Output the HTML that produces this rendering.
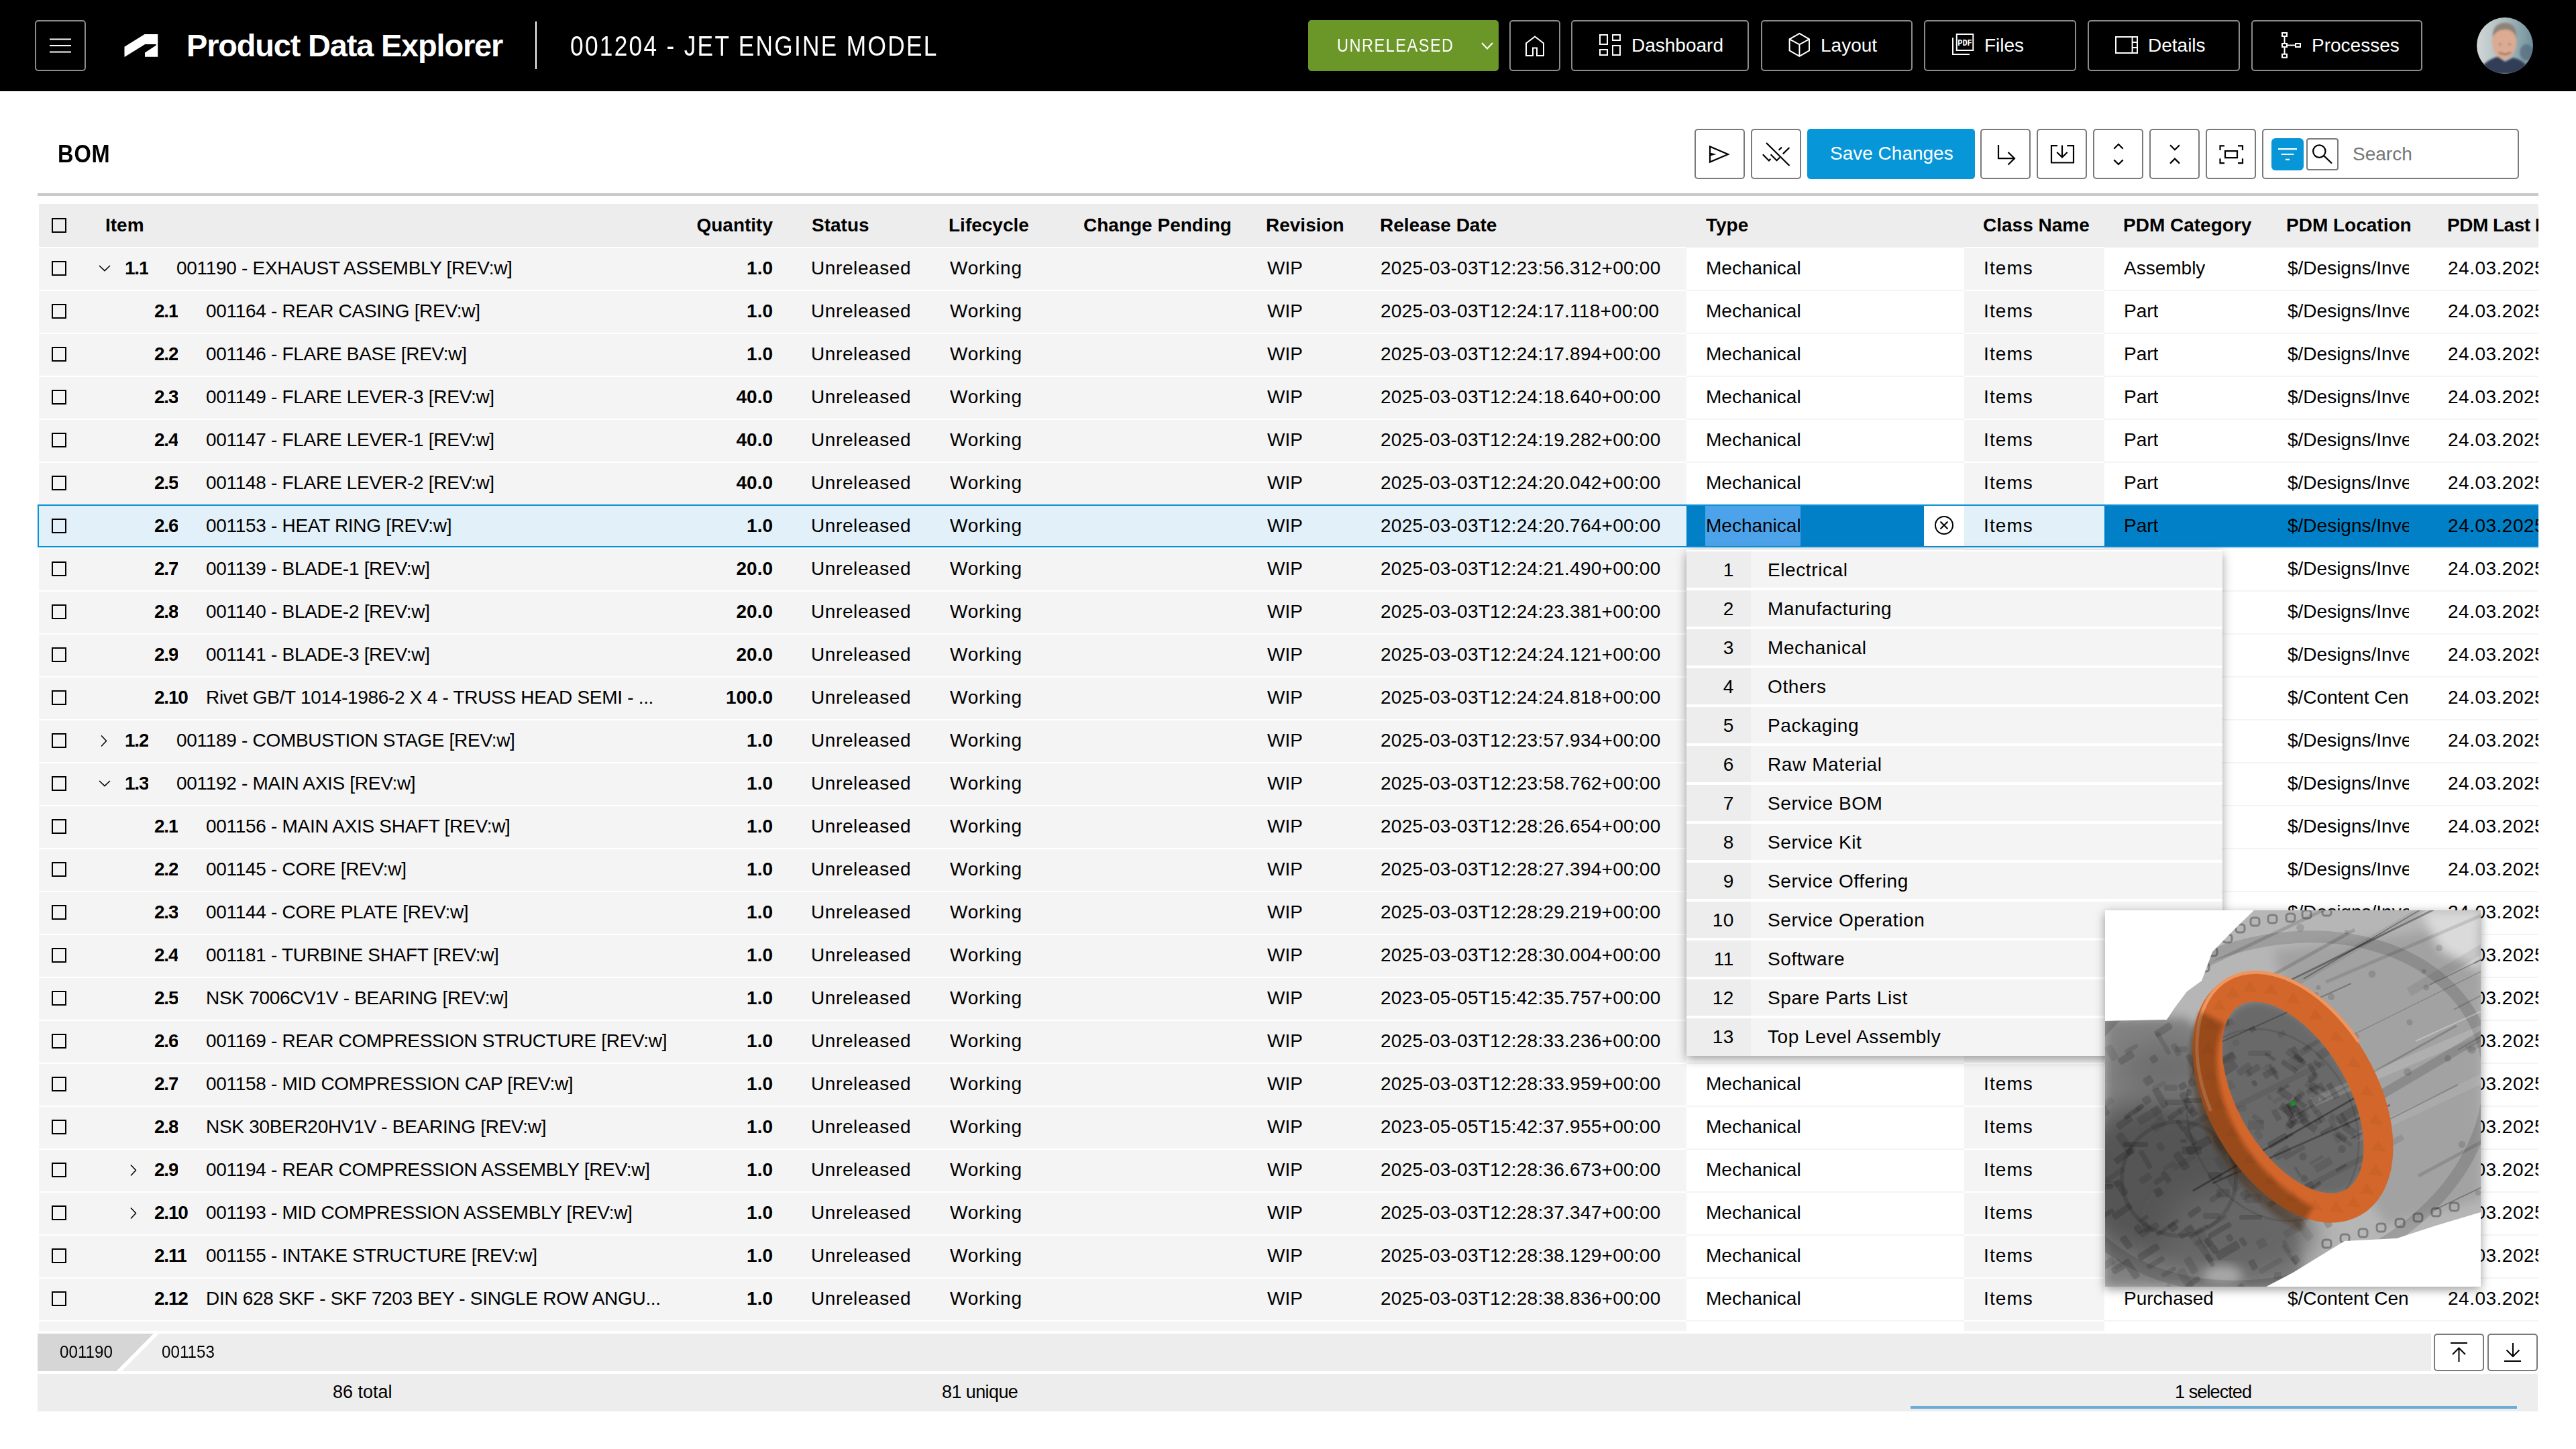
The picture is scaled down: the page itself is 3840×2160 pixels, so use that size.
<!DOCTYPE html>
<html><head><meta charset="utf-8"><style>
*{box-sizing:border-box;margin:0;padding:0}
html,body{width:3840px;height:2160px;overflow:hidden;background:#fff}
body{position:relative;font-family:"Liberation Sans",sans-serif;color:#000}
.a{position:absolute}
.hdr{left:0;top:0;width:3840px;height:136px;background:#000}
.nb{position:absolute;top:30px;height:76px;border:2px solid #8c8c8c;border-radius:5px;background:#000}
.nbt{position:absolute;color:#fff;font-size:28px;line-height:76px;top:-2px;white-space:pre}
.tb{position:absolute;top:192px;width:75px;height:75px;border:2px solid #7a7a7a;border-radius:5px;background:#fff}
.tb svg{position:absolute;left:-2px;top:-2px}
.row{position:absolute;left:58px;width:3725px;height:64px}
.c{position:absolute;top:0;height:64px;background:#f4f4f4;border-top:2px solid #fff}
.w{background:#fff;border-top-color:#f4f4f4}
.t{position:absolute;top:0;font-size:28px;line-height:59px;white-space:pre;overflow:hidden}
.b{font-weight:bold}
.cb{position:absolute;left:19px;top:19px;width:22px;height:22px;border:2px solid #000}
.hd{position:absolute;top:0;font-size:28px;line-height:64px;font-weight:bold;white-space:pre}
.dd{position:absolute;left:2514px;width:799px;height:58px}
.ddn{position:absolute;left:0;top:0;width:96px;height:56px;background:#ededed;border-bottom:2px solid #fff}
.ddl{position:absolute;left:96px;top:0;width:703px;height:56px;background:#f4f4f4;border-bottom:2px solid #fff}
.ddt{position:absolute;top:0;font-size:28px;line-height:56px;white-space:pre;letter-spacing:0.6px}
</style></head><body>
<div class="a hdr"></div>
<div class="nb" style="left:52px;width:76px"></div>
<div class="a" style="left:278px;top:44px;font-size:47px;line-height:47px;font-weight:bold;color:#fff;letter-spacing:-1.2px;white-space:pre">Product Data Explorer</div>
<div class="a" style="left:850px;top:46.6px;font-size:43px;line-height:43px;color:#fff;white-space:pre;transform:scaleX(0.82);transform-origin:0 0;letter-spacing:2.8px">001204 - JET ENGINE MODEL</div>
<div class="a" style="left:1950px;top:30px;width:284px;height:76px;background:#6b9729;border-radius:5px"></div>
<div class="a" style="left:1993px;top:54.3px;font-size:28px;line-height:28px;color:#fff;white-space:pre;transform:scaleX(0.84);transform-origin:0 0;letter-spacing:1.8px">UNRELEASED</div>
<div class="nb" style="left:2250px;width:76px"></div>
<div class="nb" style="left:2342px;width:265px"></div>
<div class="nb" style="left:2625px;width:226px"></div>
<div class="nb" style="left:2868px;width:227px"></div>
<div class="nb" style="left:3112px;width:227px"></div>
<div class="nb" style="left:3356px;width:255px"></div>
<div class="a" style="left:2432px;top:54px;font-size:28px;line-height:28px;color:#fff;white-space:pre">Dashboard</div>
<div class="a" style="left:2714px;top:54px;font-size:28px;line-height:28px;color:#fff;white-space:pre">Layout</div>
<div class="a" style="left:2958px;top:54px;font-size:28px;line-height:28px;color:#fff;white-space:pre">Files</div>
<div class="a" style="left:3202px;top:54px;font-size:28px;line-height:28px;color:#fff;white-space:pre">Details</div>
<div class="a" style="left:3446px;top:54px;font-size:28px;line-height:28px;color:#fff;white-space:pre">Processes</div>
<svg class="a" style="left:0;top:0" width="3840" height="136" fill="none" stroke="#fff" stroke-width="2"><path d="M74 58.5H106M74 68H106M74 77.5H106" stroke-width="2"/><path fill="#fff" stroke="none" d="M185.5 69.8L215.6 51H235.3V84.8H216V78.6L232.8 67.4L232.6 66H216.2L186 84.8H185.5Z"/><path d="M799 32V103"/><path d="M2209 64L2217 72.5L2225 64"/><path d="M2275 83V64.5L2288 54.5L2301 64.5V83H2291V71.5H2285V83Z"/><path d="M2385 52h11v14h-11zM2404 52h11v8h-11zM2385 74h11v8h-11zM2404 68h11v14h-11z"/><path d="M2682.4 49.8L2697 58.4V75.4L2682.4 83.8L2667.6 75.4V58.4ZM2667.6 58.4L2682.4 66.4L2697 58.4M2682.4 66.4V83.8"/><path d="M2916.8 51h24.5v24h-24.5zM2911 56.2V81H2936"/><text x="2929" y="67.5" fill="#fff" stroke="none" font-family="Liberation Mono" font-weight="bold" font-size="12" text-anchor="middle">PDF</text><path d="M3154 55h32v24h-32zM3178.6 55v24M3178.6 63h7.4M3178.6 71h7.4"/><path d="M3402 49h7v5h-7zM3402 65h7v5h-7zM3402 80.8h7v5h-7zM3422 65h7v5h-7zM3405.5 54v11M3405.5 70v10.8M3409 67.5h13"/></svg>
<svg class="a" style="left:3692px;top:26px" width="84" height="84" viewBox="0 0 84 84">
<defs><clipPath id="avc"><circle cx="42" cy="42" r="42"/></clipPath>
<linearGradient id="avbg" x1="0" y1="0" x2="1" y2="0"><stop offset="0" stop-color="#d2d6d6"/><stop offset="0.5" stop-color="#a9bcc0"/><stop offset="1" stop-color="#6f8f9a"/></linearGradient>
<filter id="avb" x="-20%" y="-20%" width="140%" height="140%"><feGaussianBlur stdDeviation="1.6"/></filter></defs>
<g clip-path="url(#avc)">
<rect width="84" height="84" fill="url(#avbg)"/>
<g filter="url(#avb)">
<ellipse cx="74" cy="52" rx="10" ry="12" fill="#566a7c" opacity="0.7"/>
<path d="M4 84C8 66 22 62 32 58L42 66L54 60C64 62 76 68 80 84Z" fill="#323d58"/>
<ellipse cx="41" cy="37" rx="18" ry="25" fill="#dcab91"/>
<path d="M24 30C23 14 32 8 42 8C54 8 61 16 59 32C57 22 50 18 42 18C34 18 27 22 24 30Z" fill="#8e8379"/>
<ellipse cx="35" cy="40" rx="2" ry="1.2" fill="#6b7f8e"/><ellipse cx="49" cy="40" rx="2" ry="1.2" fill="#6b7f8e"/>
<path d="M33 52Q42 58 51 52" stroke="#8d6a5a" stroke-width="2.5" fill="none"/>
</g></g></svg>
<div class="a" style="left:86px;top:211.4px;font-size:37px;line-height:37px;font-weight:bold;white-space:pre;transform:scaleX(0.88);transform-origin:0 0;letter-spacing:1px">BOM</div>
<div class="a" style="left:56px;top:288px;width:3728px;height:4px;background:#c9c9c9"></div>
<div class="tb" style="left:2526px"></div>
<div class="tb" style="left:2610px"></div>
<div class="tb" style="left:2952px"></div>
<div class="tb" style="left:3036px"></div>
<div class="tb" style="left:3120px"></div>
<div class="tb" style="left:3204px"></div>
<div class="tb" style="left:3288px"></div>
<div class="a" style="left:2694px;top:192px;width:250px;height:75px;background:#0796d8;border-radius:5px"></div>
<div class="a" style="left:2728px;top:215px;font-size:28px;line-height:28px;color:#fff;white-space:pre">Save Changes</div>
<div class="a" style="left:3372px;top:192px;width:383px;height:75px;border:2px solid #7a7a7a;border-radius:5px"></div>
<div class="a" style="left:3386px;top:206px;width:48px;height:48px;background:#0796d8;border-radius:6px"></div>
<div class="a" style="left:3438px;top:206px;width:48px;height:48px;border:2px solid #7a7a7a;border-radius:4px"></div>
<div class="a" style="left:3507px;top:215.5px;font-size:28px;line-height:28px;color:#767676;white-space:pre">Search</div>
<svg class="a" style="left:0;top:150px" width="3840" height="130" fill="none" stroke="#000" stroke-width="2.2"><g transform="translate(0,-150)"><path d="M2549 218.5V241.5L2576 230Z"/><path fill="#000" stroke="none" d="M2549 227.5L2558.5 230L2549 232.5Z"/><path d="M2633 213L2667.5 247M2627.8 230.2L2636.9 239.4L2639.4 236.9M2639.6 230.2L2648.5 239.2L2653 234.7M2651.6 223.8L2656 219.6M2657.8 229.4L2667.4 220"/><path d="M2979 216V236.2H3003M2993.5 227L3003 236.2L2993.5 245.5"/><path d="M3067 217.2H3058V242.5H3091V217.2H3081.2M3074 216.5V234.5M3066.3 227L3074 234.5L3081.7 227"/><path d="M3151.3 221.8L3158 215L3164.7 221.8M3151.3 238.4L3158 245L3164.7 238.4"/><path d="M3235 216.3L3242 223.2L3249 216.3M3235 243.6L3242 236.6L3249 243.6"/><path d="M3309.5 224V217.3H3316M3336 217.3H3343V224M3343 236.3V243.2H3336M3316 243.2H3309.5V236.3M3317 225.2h18v10h-18z"/><path stroke="#fff" d="M3396 222.2H3424M3400.6 230H3419.3M3407 237.8H3413"/><circle cx="3457.3" cy="225.6" r="9.2"/><path d="M3464.6 232.6L3476 243.5"/></g></svg>
<div class="a" style="left:58px;top:304px;width:3726px;height:64px;background:#ededed"></div>
<div class="cb" style="left:77px;top:325px"></div>
<div class="hd" style="left:157px;top:304px">Item</div>
<div class="hd" style="left:1210px;top:304px">Status</div>
<div class="hd" style="left:1414px;top:304px">Lifecycle</div>
<div class="hd" style="left:1615px;top:304px">Change Pending</div>
<div class="hd" style="left:1887px;top:304px">Revision</div>
<div class="hd" style="left:2057px;top:304px">Release Date</div>
<div class="hd" style="left:2543px;top:304px">Type</div>
<div class="hd" style="left:2956px;top:304px">Class Name</div>
<div class="hd" style="left:3165px;top:304px">PDM Category</div>
<div class="hd" style="left:3408px;top:304px">PDM Location</div>
<div class="hd" style="left:1152px;top:304px;transform:translateX(-100%)">Quantity</div>
<div class="hd" style="left:3648px;top:304px;width:136px;overflow:hidden;letter-spacing:-0.5px">PDM Last Modified</div>
<div class="a" style="left:0;top:368px;width:3840px;height:1616px;overflow:hidden">
<div class="a" style="left:0;top:0px;width:3840px;height:64px">
<div class="a c" style="left:58px;width:2456px"></div>
<div class="a c w" style="left:2514px;width:414px"></div>
<div class="a c" style="left:2928px;width:209px"></div>
<div class="a c w" style="left:3137px;width:647px"></div>
<div class="cb" style="left:77px;top:21px"></div>
<svg class="a" style="left:146px;top:25px" width="20" height="14" fill="none" stroke="#000" stroke-width="1.5"><path d="M2 3L10 10.6L18 3"/></svg>
<div class="t b" style="left:186px;top:2px;letter-spacing:-1.2px">1.1</div>
<div class="t" style="left:263px;top:2px;letter-spacing:-0.3px">001190 - EXHAUST ASSEMBLY [REV:w]</div>
<div class="t b" style="left:1152px;top:2px;transform:translateX(-100%)">1.0</div>
<div class="t" style="left:1209px;top:2px;letter-spacing:0.6px">Unreleased</div>
<div class="t" style="left:1416px;top:2px;letter-spacing:0.8px">Working</div>
<div class="t" style="left:1889px;top:2px">WIP</div>
<div class="t" style="left:2058px;top:2px;letter-spacing:0.25px">2025-03-03T12:23:56.312+00:00</div>
<div class="t" style="left:2543px;top:2px">Mechanical</div>
<div class="t" style="left:2957px;top:2px;letter-spacing:1.1px">Items</div>
<div class="t" style="left:3166px;top:2px">Assembly</div>
<div class="t" style="left:3410px;top:2px;width:181px">$/Designs/Inventor/Parts</div>
<div class="t" style="left:3649px;top:2px;width:135px;letter-spacing:0.5px">24.03.2025</div>
</div>
<div class="a" style="left:0;top:64px;width:3840px;height:64px">
<div class="a c" style="left:58px;width:2456px"></div>
<div class="a c w" style="left:2514px;width:414px"></div>
<div class="a c" style="left:2928px;width:209px"></div>
<div class="a c w" style="left:3137px;width:647px"></div>
<div class="cb" style="left:77px;top:21px"></div>
<div class="t b" style="left:230px;top:2px;letter-spacing:-1.2px">2.1</div>
<div class="t" style="left:307px;top:2px;letter-spacing:-0.3px">001164 - REAR CASING [REV:w]</div>
<div class="t b" style="left:1152px;top:2px;transform:translateX(-100%)">1.0</div>
<div class="t" style="left:1209px;top:2px;letter-spacing:0.6px">Unreleased</div>
<div class="t" style="left:1416px;top:2px;letter-spacing:0.8px">Working</div>
<div class="t" style="left:1889px;top:2px">WIP</div>
<div class="t" style="left:2058px;top:2px;letter-spacing:0.25px">2025-03-03T12:24:17.118+00:00</div>
<div class="t" style="left:2543px;top:2px">Mechanical</div>
<div class="t" style="left:2957px;top:2px;letter-spacing:1.1px">Items</div>
<div class="t" style="left:3166px;top:2px">Part</div>
<div class="t" style="left:3410px;top:2px;width:181px">$/Designs/Inventor/Parts</div>
<div class="t" style="left:3649px;top:2px;width:135px;letter-spacing:0.5px">24.03.2025</div>
</div>
<div class="a" style="left:0;top:128px;width:3840px;height:64px">
<div class="a c" style="left:58px;width:2456px"></div>
<div class="a c w" style="left:2514px;width:414px"></div>
<div class="a c" style="left:2928px;width:209px"></div>
<div class="a c w" style="left:3137px;width:647px"></div>
<div class="cb" style="left:77px;top:21px"></div>
<div class="t b" style="left:230px;top:2px;letter-spacing:-1.2px">2.2</div>
<div class="t" style="left:307px;top:2px;letter-spacing:-0.3px">001146 - FLARE BASE [REV:w]</div>
<div class="t b" style="left:1152px;top:2px;transform:translateX(-100%)">1.0</div>
<div class="t" style="left:1209px;top:2px;letter-spacing:0.6px">Unreleased</div>
<div class="t" style="left:1416px;top:2px;letter-spacing:0.8px">Working</div>
<div class="t" style="left:1889px;top:2px">WIP</div>
<div class="t" style="left:2058px;top:2px;letter-spacing:0.25px">2025-03-03T12:24:17.894+00:00</div>
<div class="t" style="left:2543px;top:2px">Mechanical</div>
<div class="t" style="left:2957px;top:2px;letter-spacing:1.1px">Items</div>
<div class="t" style="left:3166px;top:2px">Part</div>
<div class="t" style="left:3410px;top:2px;width:181px">$/Designs/Inventor/Parts</div>
<div class="t" style="left:3649px;top:2px;width:135px;letter-spacing:0.5px">24.03.2025</div>
</div>
<div class="a" style="left:0;top:192px;width:3840px;height:64px">
<div class="a c" style="left:58px;width:2456px"></div>
<div class="a c w" style="left:2514px;width:414px"></div>
<div class="a c" style="left:2928px;width:209px"></div>
<div class="a c w" style="left:3137px;width:647px"></div>
<div class="cb" style="left:77px;top:21px"></div>
<div class="t b" style="left:230px;top:2px;letter-spacing:-1.2px">2.3</div>
<div class="t" style="left:307px;top:2px;letter-spacing:-0.3px">001149 - FLARE LEVER-3 [REV:w]</div>
<div class="t b" style="left:1152px;top:2px;transform:translateX(-100%)">40.0</div>
<div class="t" style="left:1209px;top:2px;letter-spacing:0.6px">Unreleased</div>
<div class="t" style="left:1416px;top:2px;letter-spacing:0.8px">Working</div>
<div class="t" style="left:1889px;top:2px">WIP</div>
<div class="t" style="left:2058px;top:2px;letter-spacing:0.25px">2025-03-03T12:24:18.640+00:00</div>
<div class="t" style="left:2543px;top:2px">Mechanical</div>
<div class="t" style="left:2957px;top:2px;letter-spacing:1.1px">Items</div>
<div class="t" style="left:3166px;top:2px">Part</div>
<div class="t" style="left:3410px;top:2px;width:181px">$/Designs/Inventor/Parts</div>
<div class="t" style="left:3649px;top:2px;width:135px;letter-spacing:0.5px">24.03.2025</div>
</div>
<div class="a" style="left:0;top:256px;width:3840px;height:64px">
<div class="a c" style="left:58px;width:2456px"></div>
<div class="a c w" style="left:2514px;width:414px"></div>
<div class="a c" style="left:2928px;width:209px"></div>
<div class="a c w" style="left:3137px;width:647px"></div>
<div class="cb" style="left:77px;top:21px"></div>
<div class="t b" style="left:230px;top:2px;letter-spacing:-1.2px">2.4</div>
<div class="t" style="left:307px;top:2px;letter-spacing:-0.3px">001147 - FLARE LEVER-1 [REV:w]</div>
<div class="t b" style="left:1152px;top:2px;transform:translateX(-100%)">40.0</div>
<div class="t" style="left:1209px;top:2px;letter-spacing:0.6px">Unreleased</div>
<div class="t" style="left:1416px;top:2px;letter-spacing:0.8px">Working</div>
<div class="t" style="left:1889px;top:2px">WIP</div>
<div class="t" style="left:2058px;top:2px;letter-spacing:0.25px">2025-03-03T12:24:19.282+00:00</div>
<div class="t" style="left:2543px;top:2px">Mechanical</div>
<div class="t" style="left:2957px;top:2px;letter-spacing:1.1px">Items</div>
<div class="t" style="left:3166px;top:2px">Part</div>
<div class="t" style="left:3410px;top:2px;width:181px">$/Designs/Inventor/Parts</div>
<div class="t" style="left:3649px;top:2px;width:135px;letter-spacing:0.5px">24.03.2025</div>
</div>
<div class="a" style="left:0;top:320px;width:3840px;height:64px">
<div class="a c" style="left:58px;width:2456px"></div>
<div class="a c w" style="left:2514px;width:414px"></div>
<div class="a c" style="left:2928px;width:209px"></div>
<div class="a c w" style="left:3137px;width:647px"></div>
<div class="cb" style="left:77px;top:21px"></div>
<div class="t b" style="left:230px;top:2px;letter-spacing:-1.2px">2.5</div>
<div class="t" style="left:307px;top:2px;letter-spacing:-0.3px">001148 - FLARE LEVER-2 [REV:w]</div>
<div class="t b" style="left:1152px;top:2px;transform:translateX(-100%)">40.0</div>
<div class="t" style="left:1209px;top:2px;letter-spacing:0.6px">Unreleased</div>
<div class="t" style="left:1416px;top:2px;letter-spacing:0.8px">Working</div>
<div class="t" style="left:1889px;top:2px">WIP</div>
<div class="t" style="left:2058px;top:2px;letter-spacing:0.25px">2025-03-03T12:24:20.042+00:00</div>
<div class="t" style="left:2543px;top:2px">Mechanical</div>
<div class="t" style="left:2957px;top:2px;letter-spacing:1.1px">Items</div>
<div class="t" style="left:3166px;top:2px">Part</div>
<div class="t" style="left:3410px;top:2px;width:181px">$/Designs/Inventor/Parts</div>
<div class="t" style="left:3649px;top:2px;width:135px;letter-spacing:0.5px">24.03.2025</div>
</div>
<div class="a" style="left:0;top:384px;width:3840px;height:64px">
<div class="a" style="left:56px;top:0px;width:3728px;height:64px;background:#e1f0f9;border:2px solid #0a90d6;border-right:none"></div>
<div class="a" style="left:2514px;top:2px;width:354px;height:60px;background:#0180c8"></div>
<div class="a" style="left:2542px;top:2px;width:142px;height:60px;background:#4ca3ea"></div>
<div class="a" style="left:2868px;top:2px;width:60px;height:60px;background:#fff"></div>
<svg class="a" style="left:2883px;top:16px" width="30" height="30" fill="none" stroke="#000" stroke-width="2"><circle cx="15" cy="15" r="13"/><path d="M9.5 9.5L20.5 20.5M20.5 9.5L9.5 20.5"/></svg>
<div class="a" style="left:3137px;top:2px;width:647px;height:60px;background:#0180c8"></div>
<div class="cb" style="left:77px;top:21px"></div>
<div class="t b" style="left:230px;top:2px;letter-spacing:-1.2px">2.6</div>
<div class="t" style="left:307px;top:2px;letter-spacing:-0.3px">001153 - HEAT RING [REV:w]</div>
<div class="t b" style="left:1152px;top:2px;transform:translateX(-100%)">1.0</div>
<div class="t" style="left:1209px;top:2px;letter-spacing:0.6px">Unreleased</div>
<div class="t" style="left:1416px;top:2px;letter-spacing:0.8px">Working</div>
<div class="t" style="left:1889px;top:2px">WIP</div>
<div class="t" style="left:2058px;top:2px;letter-spacing:0.25px">2025-03-03T12:24:20.764+00:00</div>
<div class="t" style="left:2543px;top:2px">Mechanical</div>
<div class="t" style="left:2957px;top:2px;letter-spacing:1.1px">Items</div>
<div class="t" style="left:3166px;top:2px">Part</div>
<div class="t" style="left:3410px;top:2px;width:181px">$/Designs/Inventor/Parts</div>
<div class="t" style="left:3649px;top:2px;width:135px;letter-spacing:0.5px">24.03.2025</div>
</div>
<div class="a" style="left:0;top:448px;width:3840px;height:64px">
<div class="a c" style="left:58px;width:2456px"></div>
<div class="a c w" style="left:2514px;width:414px"></div>
<div class="a c" style="left:2928px;width:209px"></div>
<div class="a c w" style="left:3137px;width:647px"></div>
<div class="cb" style="left:77px;top:21px"></div>
<div class="t b" style="left:230px;top:2px;letter-spacing:-1.2px">2.7</div>
<div class="t" style="left:307px;top:2px;letter-spacing:-0.3px">001139 - BLADE-1 [REV:w]</div>
<div class="t b" style="left:1152px;top:2px;transform:translateX(-100%)">20.0</div>
<div class="t" style="left:1209px;top:2px;letter-spacing:0.6px">Unreleased</div>
<div class="t" style="left:1416px;top:2px;letter-spacing:0.8px">Working</div>
<div class="t" style="left:1889px;top:2px">WIP</div>
<div class="t" style="left:2058px;top:2px;letter-spacing:0.25px">2025-03-03T12:24:21.490+00:00</div>
<div class="t" style="left:2543px;top:2px">Mechanical</div>
<div class="t" style="left:2957px;top:2px;letter-spacing:1.1px">Items</div>
<div class="t" style="left:3166px;top:2px">Part</div>
<div class="t" style="left:3410px;top:2px;width:181px">$/Designs/Inventor/Parts</div>
<div class="t" style="left:3649px;top:2px;width:135px;letter-spacing:0.5px">24.03.2025</div>
</div>
<div class="a" style="left:0;top:512px;width:3840px;height:64px">
<div class="a c" style="left:58px;width:2456px"></div>
<div class="a c w" style="left:2514px;width:414px"></div>
<div class="a c" style="left:2928px;width:209px"></div>
<div class="a c w" style="left:3137px;width:647px"></div>
<div class="cb" style="left:77px;top:21px"></div>
<div class="t b" style="left:230px;top:2px;letter-spacing:-1.2px">2.8</div>
<div class="t" style="left:307px;top:2px;letter-spacing:-0.3px">001140 - BLADE-2 [REV:w]</div>
<div class="t b" style="left:1152px;top:2px;transform:translateX(-100%)">20.0</div>
<div class="t" style="left:1209px;top:2px;letter-spacing:0.6px">Unreleased</div>
<div class="t" style="left:1416px;top:2px;letter-spacing:0.8px">Working</div>
<div class="t" style="left:1889px;top:2px">WIP</div>
<div class="t" style="left:2058px;top:2px;letter-spacing:0.25px">2025-03-03T12:24:23.381+00:00</div>
<div class="t" style="left:2543px;top:2px">Mechanical</div>
<div class="t" style="left:2957px;top:2px;letter-spacing:1.1px">Items</div>
<div class="t" style="left:3166px;top:2px">Part</div>
<div class="t" style="left:3410px;top:2px;width:181px">$/Designs/Inventor/Parts</div>
<div class="t" style="left:3649px;top:2px;width:135px;letter-spacing:0.5px">24.03.2025</div>
</div>
<div class="a" style="left:0;top:576px;width:3840px;height:64px">
<div class="a c" style="left:58px;width:2456px"></div>
<div class="a c w" style="left:2514px;width:414px"></div>
<div class="a c" style="left:2928px;width:209px"></div>
<div class="a c w" style="left:3137px;width:647px"></div>
<div class="cb" style="left:77px;top:21px"></div>
<div class="t b" style="left:230px;top:2px;letter-spacing:-1.2px">2.9</div>
<div class="t" style="left:307px;top:2px;letter-spacing:-0.3px">001141 - BLADE-3 [REV:w]</div>
<div class="t b" style="left:1152px;top:2px;transform:translateX(-100%)">20.0</div>
<div class="t" style="left:1209px;top:2px;letter-spacing:0.6px">Unreleased</div>
<div class="t" style="left:1416px;top:2px;letter-spacing:0.8px">Working</div>
<div class="t" style="left:1889px;top:2px">WIP</div>
<div class="t" style="left:2058px;top:2px;letter-spacing:0.25px">2025-03-03T12:24:24.121+00:00</div>
<div class="t" style="left:2543px;top:2px">Mechanical</div>
<div class="t" style="left:2957px;top:2px;letter-spacing:1.1px">Items</div>
<div class="t" style="left:3166px;top:2px">Part</div>
<div class="t" style="left:3410px;top:2px;width:181px">$/Designs/Inventor/Parts</div>
<div class="t" style="left:3649px;top:2px;width:135px;letter-spacing:0.5px">24.03.2025</div>
</div>
<div class="a" style="left:0;top:640px;width:3840px;height:64px">
<div class="a c" style="left:58px;width:2456px"></div>
<div class="a c w" style="left:2514px;width:414px"></div>
<div class="a c" style="left:2928px;width:209px"></div>
<div class="a c w" style="left:3137px;width:647px"></div>
<div class="cb" style="left:77px;top:21px"></div>
<div class="t b" style="left:230px;top:2px;letter-spacing:-1.2px">2.10</div>
<div class="t" style="left:307px;top:2px;letter-spacing:-0.3px">Rivet GB/T 1014-1986-2 X 4 - TRUSS HEAD SEMI - ...</div>
<div class="t b" style="left:1152px;top:2px;transform:translateX(-100%)">100.0</div>
<div class="t" style="left:1209px;top:2px;letter-spacing:0.6px">Unreleased</div>
<div class="t" style="left:1416px;top:2px;letter-spacing:0.8px">Working</div>
<div class="t" style="left:1889px;top:2px">WIP</div>
<div class="t" style="left:2058px;top:2px;letter-spacing:0.25px">2025-03-03T12:24:24.818+00:00</div>
<div class="t" style="left:2543px;top:2px">Mechanical</div>
<div class="t" style="left:2957px;top:2px;letter-spacing:1.1px">Items</div>
<div class="t" style="left:3166px;top:2px">Purchased</div>
<div class="t" style="left:3410px;top:2px;width:181px">$/Content Center Files</div>
<div class="t" style="left:3649px;top:2px;width:135px;letter-spacing:0.5px">24.03.2025</div>
</div>
<div class="a" style="left:0;top:704px;width:3840px;height:64px">
<div class="a c" style="left:58px;width:2456px"></div>
<div class="a c w" style="left:2514px;width:414px"></div>
<div class="a c" style="left:2928px;width:209px"></div>
<div class="a c w" style="left:3137px;width:647px"></div>
<div class="cb" style="left:77px;top:21px"></div>
<svg class="a" style="left:149px;top:22px" width="14" height="22" fill="none" stroke="#000" stroke-width="1.5"><path d="M2 2.5L9.5 10.5L2 18.5"/></svg>
<div class="t b" style="left:186px;top:2px;letter-spacing:-1.2px">1.2</div>
<div class="t" style="left:263px;top:2px;letter-spacing:-0.3px">001189 - COMBUSTION STAGE [REV:w]</div>
<div class="t b" style="left:1152px;top:2px;transform:translateX(-100%)">1.0</div>
<div class="t" style="left:1209px;top:2px;letter-spacing:0.6px">Unreleased</div>
<div class="t" style="left:1416px;top:2px;letter-spacing:0.8px">Working</div>
<div class="t" style="left:1889px;top:2px">WIP</div>
<div class="t" style="left:2058px;top:2px;letter-spacing:0.25px">2025-03-03T12:23:57.934+00:00</div>
<div class="t" style="left:2543px;top:2px">Mechanical</div>
<div class="t" style="left:2957px;top:2px;letter-spacing:1.1px">Items</div>
<div class="t" style="left:3166px;top:2px">Assembly</div>
<div class="t" style="left:3410px;top:2px;width:181px">$/Designs/Inventor/Parts</div>
<div class="t" style="left:3649px;top:2px;width:135px;letter-spacing:0.5px">24.03.2025</div>
</div>
<div class="a" style="left:0;top:768px;width:3840px;height:64px">
<div class="a c" style="left:58px;width:2456px"></div>
<div class="a c w" style="left:2514px;width:414px"></div>
<div class="a c" style="left:2928px;width:209px"></div>
<div class="a c w" style="left:3137px;width:647px"></div>
<div class="cb" style="left:77px;top:21px"></div>
<svg class="a" style="left:146px;top:25px" width="20" height="14" fill="none" stroke="#000" stroke-width="1.5"><path d="M2 3L10 10.6L18 3"/></svg>
<div class="t b" style="left:186px;top:2px;letter-spacing:-1.2px">1.3</div>
<div class="t" style="left:263px;top:2px;letter-spacing:-0.3px">001192 - MAIN AXIS [REV:w]</div>
<div class="t b" style="left:1152px;top:2px;transform:translateX(-100%)">1.0</div>
<div class="t" style="left:1209px;top:2px;letter-spacing:0.6px">Unreleased</div>
<div class="t" style="left:1416px;top:2px;letter-spacing:0.8px">Working</div>
<div class="t" style="left:1889px;top:2px">WIP</div>
<div class="t" style="left:2058px;top:2px;letter-spacing:0.25px">2025-03-03T12:23:58.762+00:00</div>
<div class="t" style="left:2543px;top:2px">Mechanical</div>
<div class="t" style="left:2957px;top:2px;letter-spacing:1.1px">Items</div>
<div class="t" style="left:3166px;top:2px">Assembly</div>
<div class="t" style="left:3410px;top:2px;width:181px">$/Designs/Inventor/Parts</div>
<div class="t" style="left:3649px;top:2px;width:135px;letter-spacing:0.5px">24.03.2025</div>
</div>
<div class="a" style="left:0;top:832px;width:3840px;height:64px">
<div class="a c" style="left:58px;width:2456px"></div>
<div class="a c w" style="left:2514px;width:414px"></div>
<div class="a c" style="left:2928px;width:209px"></div>
<div class="a c w" style="left:3137px;width:647px"></div>
<div class="cb" style="left:77px;top:21px"></div>
<div class="t b" style="left:230px;top:2px;letter-spacing:-1.2px">2.1</div>
<div class="t" style="left:307px;top:2px;letter-spacing:-0.3px">001156 - MAIN AXIS SHAFT [REV:w]</div>
<div class="t b" style="left:1152px;top:2px;transform:translateX(-100%)">1.0</div>
<div class="t" style="left:1209px;top:2px;letter-spacing:0.6px">Unreleased</div>
<div class="t" style="left:1416px;top:2px;letter-spacing:0.8px">Working</div>
<div class="t" style="left:1889px;top:2px">WIP</div>
<div class="t" style="left:2058px;top:2px;letter-spacing:0.25px">2025-03-03T12:28:26.654+00:00</div>
<div class="t" style="left:2543px;top:2px">Mechanical</div>
<div class="t" style="left:2957px;top:2px;letter-spacing:1.1px">Items</div>
<div class="t" style="left:3166px;top:2px">Part</div>
<div class="t" style="left:3410px;top:2px;width:181px">$/Designs/Inventor/Parts</div>
<div class="t" style="left:3649px;top:2px;width:135px;letter-spacing:0.5px">24.03.2025</div>
</div>
<div class="a" style="left:0;top:896px;width:3840px;height:64px">
<div class="a c" style="left:58px;width:2456px"></div>
<div class="a c w" style="left:2514px;width:414px"></div>
<div class="a c" style="left:2928px;width:209px"></div>
<div class="a c w" style="left:3137px;width:647px"></div>
<div class="cb" style="left:77px;top:21px"></div>
<div class="t b" style="left:230px;top:2px;letter-spacing:-1.2px">2.2</div>
<div class="t" style="left:307px;top:2px;letter-spacing:-0.3px">001145 - CORE [REV:w]</div>
<div class="t b" style="left:1152px;top:2px;transform:translateX(-100%)">1.0</div>
<div class="t" style="left:1209px;top:2px;letter-spacing:0.6px">Unreleased</div>
<div class="t" style="left:1416px;top:2px;letter-spacing:0.8px">Working</div>
<div class="t" style="left:1889px;top:2px">WIP</div>
<div class="t" style="left:2058px;top:2px;letter-spacing:0.25px">2025-03-03T12:28:27.394+00:00</div>
<div class="t" style="left:2543px;top:2px">Mechanical</div>
<div class="t" style="left:2957px;top:2px;letter-spacing:1.1px">Items</div>
<div class="t" style="left:3166px;top:2px">Part</div>
<div class="t" style="left:3410px;top:2px;width:181px">$/Designs/Inventor/Parts</div>
<div class="t" style="left:3649px;top:2px;width:135px;letter-spacing:0.5px">24.03.2025</div>
</div>
<div class="a" style="left:0;top:960px;width:3840px;height:64px">
<div class="a c" style="left:58px;width:2456px"></div>
<div class="a c w" style="left:2514px;width:414px"></div>
<div class="a c" style="left:2928px;width:209px"></div>
<div class="a c w" style="left:3137px;width:647px"></div>
<div class="cb" style="left:77px;top:21px"></div>
<div class="t b" style="left:230px;top:2px;letter-spacing:-1.2px">2.3</div>
<div class="t" style="left:307px;top:2px;letter-spacing:-0.3px">001144 - CORE PLATE [REV:w]</div>
<div class="t b" style="left:1152px;top:2px;transform:translateX(-100%)">1.0</div>
<div class="t" style="left:1209px;top:2px;letter-spacing:0.6px">Unreleased</div>
<div class="t" style="left:1416px;top:2px;letter-spacing:0.8px">Working</div>
<div class="t" style="left:1889px;top:2px">WIP</div>
<div class="t" style="left:2058px;top:2px;letter-spacing:0.25px">2025-03-03T12:28:29.219+00:00</div>
<div class="t" style="left:2543px;top:2px">Mechanical</div>
<div class="t" style="left:2957px;top:2px;letter-spacing:1.1px">Items</div>
<div class="t" style="left:3166px;top:2px">Part</div>
<div class="t" style="left:3410px;top:2px;width:181px">$/Designs/Inventor/Parts</div>
<div class="t" style="left:3649px;top:2px;width:135px;letter-spacing:0.5px">24.03.2025</div>
</div>
<div class="a" style="left:0;top:1024px;width:3840px;height:64px">
<div class="a c" style="left:58px;width:2456px"></div>
<div class="a c w" style="left:2514px;width:414px"></div>
<div class="a c" style="left:2928px;width:209px"></div>
<div class="a c w" style="left:3137px;width:647px"></div>
<div class="cb" style="left:77px;top:21px"></div>
<div class="t b" style="left:230px;top:2px;letter-spacing:-1.2px">2.4</div>
<div class="t" style="left:307px;top:2px;letter-spacing:-0.3px">001181 - TURBINE SHAFT [REV:w]</div>
<div class="t b" style="left:1152px;top:2px;transform:translateX(-100%)">1.0</div>
<div class="t" style="left:1209px;top:2px;letter-spacing:0.6px">Unreleased</div>
<div class="t" style="left:1416px;top:2px;letter-spacing:0.8px">Working</div>
<div class="t" style="left:1889px;top:2px">WIP</div>
<div class="t" style="left:2058px;top:2px;letter-spacing:0.25px">2025-03-03T12:28:30.004+00:00</div>
<div class="t" style="left:2543px;top:2px">Mechanical</div>
<div class="t" style="left:2957px;top:2px;letter-spacing:1.1px">Items</div>
<div class="t" style="left:3166px;top:2px">Part</div>
<div class="t" style="left:3410px;top:2px;width:181px">$/Designs/Inventor/Parts</div>
<div class="t" style="left:3649px;top:2px;width:135px;letter-spacing:0.5px">24.03.2025</div>
</div>
<div class="a" style="left:0;top:1088px;width:3840px;height:64px">
<div class="a c" style="left:58px;width:2456px"></div>
<div class="a c w" style="left:2514px;width:414px"></div>
<div class="a c" style="left:2928px;width:209px"></div>
<div class="a c w" style="left:3137px;width:647px"></div>
<div class="cb" style="left:77px;top:21px"></div>
<div class="t b" style="left:230px;top:2px;letter-spacing:-1.2px">2.5</div>
<div class="t" style="left:307px;top:2px;letter-spacing:-0.3px">NSK 7006CV1V - BEARING [REV:w]</div>
<div class="t b" style="left:1152px;top:2px;transform:translateX(-100%)">1.0</div>
<div class="t" style="left:1209px;top:2px;letter-spacing:0.6px">Unreleased</div>
<div class="t" style="left:1416px;top:2px;letter-spacing:0.8px">Working</div>
<div class="t" style="left:1889px;top:2px">WIP</div>
<div class="t" style="left:2058px;top:2px;letter-spacing:0.25px">2023-05-05T15:42:35.757+00:00</div>
<div class="t" style="left:2543px;top:2px">Mechanical</div>
<div class="t" style="left:2957px;top:2px;letter-spacing:1.1px">Items</div>
<div class="t" style="left:3166px;top:2px">Purchased</div>
<div class="t" style="left:3410px;top:2px;width:181px">$/Content Center Files</div>
<div class="t" style="left:3649px;top:2px;width:135px;letter-spacing:0.5px">24.03.2025</div>
</div>
<div class="a" style="left:0;top:1152px;width:3840px;height:64px">
<div class="a c" style="left:58px;width:2456px"></div>
<div class="a c w" style="left:2514px;width:414px"></div>
<div class="a c" style="left:2928px;width:209px"></div>
<div class="a c w" style="left:3137px;width:647px"></div>
<div class="cb" style="left:77px;top:21px"></div>
<div class="t b" style="left:230px;top:2px;letter-spacing:-1.2px">2.6</div>
<div class="t" style="left:307px;top:2px;letter-spacing:-0.3px">001169 - REAR COMPRESSION STRUCTURE [REV:w]</div>
<div class="t b" style="left:1152px;top:2px;transform:translateX(-100%)">1.0</div>
<div class="t" style="left:1209px;top:2px;letter-spacing:0.6px">Unreleased</div>
<div class="t" style="left:1416px;top:2px;letter-spacing:0.8px">Working</div>
<div class="t" style="left:1889px;top:2px">WIP</div>
<div class="t" style="left:2058px;top:2px;letter-spacing:0.25px">2025-03-03T12:28:33.236+00:00</div>
<div class="t" style="left:2543px;top:2px">Mechanical</div>
<div class="t" style="left:2957px;top:2px;letter-spacing:1.1px">Items</div>
<div class="t" style="left:3166px;top:2px">Part</div>
<div class="t" style="left:3410px;top:2px;width:181px">$/Designs/Inventor/Parts</div>
<div class="t" style="left:3649px;top:2px;width:135px;letter-spacing:0.5px">24.03.2025</div>
</div>
<div class="a" style="left:0;top:1216px;width:3840px;height:64px">
<div class="a c" style="left:58px;width:2456px"></div>
<div class="a c w" style="left:2514px;width:414px"></div>
<div class="a c" style="left:2928px;width:209px"></div>
<div class="a c w" style="left:3137px;width:647px"></div>
<div class="cb" style="left:77px;top:21px"></div>
<div class="t b" style="left:230px;top:2px;letter-spacing:-1.2px">2.7</div>
<div class="t" style="left:307px;top:2px;letter-spacing:-0.3px">001158 - MID COMPRESSION CAP [REV:w]</div>
<div class="t b" style="left:1152px;top:2px;transform:translateX(-100%)">1.0</div>
<div class="t" style="left:1209px;top:2px;letter-spacing:0.6px">Unreleased</div>
<div class="t" style="left:1416px;top:2px;letter-spacing:0.8px">Working</div>
<div class="t" style="left:1889px;top:2px">WIP</div>
<div class="t" style="left:2058px;top:2px;letter-spacing:0.25px">2025-03-03T12:28:33.959+00:00</div>
<div class="t" style="left:2543px;top:2px">Mechanical</div>
<div class="t" style="left:2957px;top:2px;letter-spacing:1.1px">Items</div>
<div class="t" style="left:3166px;top:2px">Part</div>
<div class="t" style="left:3410px;top:2px;width:181px">$/Designs/Inventor/Parts</div>
<div class="t" style="left:3649px;top:2px;width:135px;letter-spacing:0.5px">24.03.2025</div>
</div>
<div class="a" style="left:0;top:1280px;width:3840px;height:64px">
<div class="a c" style="left:58px;width:2456px"></div>
<div class="a c w" style="left:2514px;width:414px"></div>
<div class="a c" style="left:2928px;width:209px"></div>
<div class="a c w" style="left:3137px;width:647px"></div>
<div class="cb" style="left:77px;top:21px"></div>
<div class="t b" style="left:230px;top:2px;letter-spacing:-1.2px">2.8</div>
<div class="t" style="left:307px;top:2px;letter-spacing:-0.3px">NSK 30BER20HV1V - BEARING [REV:w]</div>
<div class="t b" style="left:1152px;top:2px;transform:translateX(-100%)">1.0</div>
<div class="t" style="left:1209px;top:2px;letter-spacing:0.6px">Unreleased</div>
<div class="t" style="left:1416px;top:2px;letter-spacing:0.8px">Working</div>
<div class="t" style="left:1889px;top:2px">WIP</div>
<div class="t" style="left:2058px;top:2px;letter-spacing:0.25px">2023-05-05T15:42:37.955+00:00</div>
<div class="t" style="left:2543px;top:2px">Mechanical</div>
<div class="t" style="left:2957px;top:2px;letter-spacing:1.1px">Items</div>
<div class="t" style="left:3166px;top:2px">Purchased</div>
<div class="t" style="left:3410px;top:2px;width:181px">$/Content Center Files</div>
<div class="t" style="left:3649px;top:2px;width:135px;letter-spacing:0.5px">24.03.2025</div>
</div>
<div class="a" style="left:0;top:1344px;width:3840px;height:64px">
<div class="a c" style="left:58px;width:2456px"></div>
<div class="a c w" style="left:2514px;width:414px"></div>
<div class="a c" style="left:2928px;width:209px"></div>
<div class="a c w" style="left:3137px;width:647px"></div>
<div class="cb" style="left:77px;top:21px"></div>
<svg class="a" style="left:193px;top:22px" width="14" height="22" fill="none" stroke="#000" stroke-width="1.5"><path d="M2 2.5L9.5 10.5L2 18.5"/></svg>
<div class="t b" style="left:230px;top:2px;letter-spacing:-1.2px">2.9</div>
<div class="t" style="left:307px;top:2px;letter-spacing:-0.3px">001194 - REAR COMPRESSION ASSEMBLY [REV:w]</div>
<div class="t b" style="left:1152px;top:2px;transform:translateX(-100%)">1.0</div>
<div class="t" style="left:1209px;top:2px;letter-spacing:0.6px">Unreleased</div>
<div class="t" style="left:1416px;top:2px;letter-spacing:0.8px">Working</div>
<div class="t" style="left:1889px;top:2px">WIP</div>
<div class="t" style="left:2058px;top:2px;letter-spacing:0.25px">2025-03-03T12:28:36.673+00:00</div>
<div class="t" style="left:2543px;top:2px">Mechanical</div>
<div class="t" style="left:2957px;top:2px;letter-spacing:1.1px">Items</div>
<div class="t" style="left:3166px;top:2px">Assembly</div>
<div class="t" style="left:3410px;top:2px;width:181px">$/Designs/Inventor/Parts</div>
<div class="t" style="left:3649px;top:2px;width:135px;letter-spacing:0.5px">24.03.2025</div>
</div>
<div class="a" style="left:0;top:1408px;width:3840px;height:64px">
<div class="a c" style="left:58px;width:2456px"></div>
<div class="a c w" style="left:2514px;width:414px"></div>
<div class="a c" style="left:2928px;width:209px"></div>
<div class="a c w" style="left:3137px;width:647px"></div>
<div class="cb" style="left:77px;top:21px"></div>
<svg class="a" style="left:193px;top:22px" width="14" height="22" fill="none" stroke="#000" stroke-width="1.5"><path d="M2 2.5L9.5 10.5L2 18.5"/></svg>
<div class="t b" style="left:230px;top:2px;letter-spacing:-1.2px">2.10</div>
<div class="t" style="left:307px;top:2px;letter-spacing:-0.3px">001193 - MID COMPRESSION ASSEMBLY [REV:w]</div>
<div class="t b" style="left:1152px;top:2px;transform:translateX(-100%)">1.0</div>
<div class="t" style="left:1209px;top:2px;letter-spacing:0.6px">Unreleased</div>
<div class="t" style="left:1416px;top:2px;letter-spacing:0.8px">Working</div>
<div class="t" style="left:1889px;top:2px">WIP</div>
<div class="t" style="left:2058px;top:2px;letter-spacing:0.25px">2025-03-03T12:28:37.347+00:00</div>
<div class="t" style="left:2543px;top:2px">Mechanical</div>
<div class="t" style="left:2957px;top:2px;letter-spacing:1.1px">Items</div>
<div class="t" style="left:3166px;top:2px">Assembly</div>
<div class="t" style="left:3410px;top:2px;width:181px">$/Designs/Inventor/Parts</div>
<div class="t" style="left:3649px;top:2px;width:135px;letter-spacing:0.5px">24.03.2025</div>
</div>
<div class="a" style="left:0;top:1472px;width:3840px;height:64px">
<div class="a c" style="left:58px;width:2456px"></div>
<div class="a c w" style="left:2514px;width:414px"></div>
<div class="a c" style="left:2928px;width:209px"></div>
<div class="a c w" style="left:3137px;width:647px"></div>
<div class="cb" style="left:77px;top:21px"></div>
<div class="t b" style="left:230px;top:2px;letter-spacing:-1.2px">2.11</div>
<div class="t" style="left:307px;top:2px;letter-spacing:-0.3px">001155 - INTAKE STRUCTURE [REV:w]</div>
<div class="t b" style="left:1152px;top:2px;transform:translateX(-100%)">1.0</div>
<div class="t" style="left:1209px;top:2px;letter-spacing:0.6px">Unreleased</div>
<div class="t" style="left:1416px;top:2px;letter-spacing:0.8px">Working</div>
<div class="t" style="left:1889px;top:2px">WIP</div>
<div class="t" style="left:2058px;top:2px;letter-spacing:0.25px">2025-03-03T12:28:38.129+00:00</div>
<div class="t" style="left:2543px;top:2px">Mechanical</div>
<div class="t" style="left:2957px;top:2px;letter-spacing:1.1px">Items</div>
<div class="t" style="left:3166px;top:2px">Part</div>
<div class="t" style="left:3410px;top:2px;width:181px">$/Designs/Inventor/Parts</div>
<div class="t" style="left:3649px;top:2px;width:135px;letter-spacing:0.5px">24.03.2025</div>
</div>
<div class="a" style="left:0;top:1536px;width:3840px;height:64px">
<div class="a c" style="left:58px;width:2456px"></div>
<div class="a c w" style="left:2514px;width:414px"></div>
<div class="a c" style="left:2928px;width:209px"></div>
<div class="a c w" style="left:3137px;width:647px"></div>
<div class="cb" style="left:77px;top:21px"></div>
<div class="t b" style="left:230px;top:2px;letter-spacing:-1.2px">2.12</div>
<div class="t" style="left:307px;top:2px;letter-spacing:-0.3px">DIN 628 SKF - SKF 7203 BEY - SINGLE ROW ANGU...</div>
<div class="t b" style="left:1152px;top:2px;transform:translateX(-100%)">1.0</div>
<div class="t" style="left:1209px;top:2px;letter-spacing:0.6px">Unreleased</div>
<div class="t" style="left:1416px;top:2px;letter-spacing:0.8px">Working</div>
<div class="t" style="left:1889px;top:2px">WIP</div>
<div class="t" style="left:2058px;top:2px;letter-spacing:0.25px">2025-03-03T12:28:38.836+00:00</div>
<div class="t" style="left:2543px;top:2px">Mechanical</div>
<div class="t" style="left:2957px;top:2px;letter-spacing:1.1px">Items</div>
<div class="t" style="left:3166px;top:2px">Purchased</div>
<div class="t" style="left:3410px;top:2px;width:181px">$/Content Center Files</div>
<div class="t" style="left:3649px;top:2px;width:135px;letter-spacing:0.5px">24.03.2025</div>
</div>
<div class="a" style="left:0;top:1600px;width:3840px;height:64px">
<div class="a c" style="left:58px;width:2456px"></div>
<div class="a c w" style="left:2514px;width:414px"></div>
<div class="a c" style="left:2928px;width:209px"></div>
<div class="a c w" style="left:3137px;width:647px"></div>
</div>
</div>
<div class="a" style="left:2514px;top:820px;width:799px;height:754px;box-shadow:0 5px 14px rgba(0,0,0,0.38);background:#fff"></div>
<div class="dd" style="top:822px"><div class="ddn" style=""></div><div class="ddl" style=""></div><div class="ddt" style="left:71px;transform:translateX(-100%)">1</div><div class="ddt" style="left:121px">Electrical</div></div>
<div class="dd" style="top:880px"><div class="ddn" style=""></div><div class="ddl" style=""></div><div class="ddt" style="left:71px;transform:translateX(-100%)">2</div><div class="ddt" style="left:121px">Manufacturing</div></div>
<div class="dd" style="top:938px"><div class="ddn" style=""></div><div class="ddl" style=""></div><div class="ddt" style="left:71px;transform:translateX(-100%)">3</div><div class="ddt" style="left:121px">Mechanical</div></div>
<div class="dd" style="top:996px"><div class="ddn" style=""></div><div class="ddl" style=""></div><div class="ddt" style="left:71px;transform:translateX(-100%)">4</div><div class="ddt" style="left:121px">Others</div></div>
<div class="dd" style="top:1054px"><div class="ddn" style=""></div><div class="ddl" style=""></div><div class="ddt" style="left:71px;transform:translateX(-100%)">5</div><div class="ddt" style="left:121px">Packaging</div></div>
<div class="dd" style="top:1112px"><div class="ddn" style=""></div><div class="ddl" style=""></div><div class="ddt" style="left:71px;transform:translateX(-100%)">6</div><div class="ddt" style="left:121px">Raw Material</div></div>
<div class="dd" style="top:1170px"><div class="ddn" style=""></div><div class="ddl" style=""></div><div class="ddt" style="left:71px;transform:translateX(-100%)">7</div><div class="ddt" style="left:121px">Service BOM</div></div>
<div class="dd" style="top:1228px"><div class="ddn" style=""></div><div class="ddl" style=""></div><div class="ddt" style="left:71px;transform:translateX(-100%)">8</div><div class="ddt" style="left:121px">Service Kit</div></div>
<div class="dd" style="top:1286px"><div class="ddn" style=""></div><div class="ddl" style=""></div><div class="ddt" style="left:71px;transform:translateX(-100%)">9</div><div class="ddt" style="left:121px">Service Offering</div></div>
<div class="dd" style="top:1344px"><div class="ddn" style=""></div><div class="ddl" style=""></div><div class="ddt" style="left:71px;transform:translateX(-100%)">10</div><div class="ddt" style="left:121px">Service Operation</div></div>
<div class="dd" style="top:1402px"><div class="ddn" style=""></div><div class="ddl" style=""></div><div class="ddt" style="left:71px;transform:translateX(-100%)">11</div><div class="ddt" style="left:121px">Software</div></div>
<div class="dd" style="top:1460px"><div class="ddn" style=""></div><div class="ddl" style=""></div><div class="ddt" style="left:71px;transform:translateX(-100%)">12</div><div class="ddt" style="left:121px">Spare Parts List</div></div>
<div class="dd" style="top:1518px"><div class="ddn" style="border-bottom:none;height:56px"></div><div class="ddl" style="border-bottom:none;height:56px"></div><div class="ddt" style="left:71px;transform:translateX(-100%)">13</div><div class="ddt" style="left:121px">Top Level Assembly</div></div>
<div class="a" style="left:3138px;top:1357px;width:560px;height:561px;box-shadow:0 4px 14px rgba(0,0,0,0.4);background:#fff;overflow:hidden"><svg width="560" height="561" viewBox="0 0 560 561"><defs>
<filter id="b8" x="-20%" y="-20%" width="140%" height="140%"><feGaussianBlur stdDeviation="8"/></filter>
<filter id="b20" x="-40%" y="-40%" width="180%" height="180%"><feGaussianBlur stdDeviation="22"/></filter>
<filter id="b1"><feGaussianBlur stdDeviation="0.8"/></filter>
<filter id="b3" x="-20%" y="-20%" width="140%" height="140%"><feGaussianBlur stdDeviation="3"/></filter>
<clipPath id="sil"><path d="M0 165L92 163L104 145L122 121L144 105L160 62L192 29L222 0H560V450L493 470L435 489L357 493L280 540L240 561H0Z"/></clipPath>
</defs><rect width="560" height="561" fill="#fff"/><g clip-path="url(#sil)"><rect width="560" height="561" fill="#b6b6b6"/><path fill="#a2a2a2" d="M250 60L560 20V430L420 470L330 330Z" filter="url(#b8)"/><path fill="#dadada" d="M470 0H560V90L500 60Z" filter="url(#b8)"/><path fill="#828282" d="M0 160L120 160L230 260L300 561H0Z" filter="url(#b8)"/><ellipse cx="85" cy="400" rx="140" ry="120" fill="#545454" filter="url(#b20)"/><ellipse cx="90" cy="235" rx="70" ry="40" fill="#6e6e6e" filter="url(#b20)"/><ellipse cx="200" cy="480" rx="110" ry="70" fill="#666" filter="url(#b20)"/><ellipse cx="175" cy="545" rx="30" ry="16" fill="#a8a8a8" filter="url(#b8)"/><ellipse cx="280" cy="281" rx="165" ry="92" transform="rotate(60 280 281)" fill="#696969" filter="url(#b8)"/><ellipse cx="250" cy="300" rx="330" ry="250" transform="rotate(-20 250 300)" fill="none" stroke="#000" stroke-opacity="0.13" stroke-width="18"/><path d="M262 122L543 -43" stroke="#000" stroke-opacity="0.07" stroke-width="9"/><path d="M520 148L674 68" stroke="#000" stroke-opacity="0.17" stroke-width="2"/><path d="M484 111L673 19" stroke="#000" stroke-opacity="0.27" stroke-width="1.5"/><path d="M550 79L884 -104" stroke="#000" stroke-opacity="0.26" stroke-width="2"/><path d="M367 340L526 260" stroke="#000" stroke-opacity="0.22" stroke-width="2"/><path d="M148 84L333 -4" stroke="#000" stroke-opacity="0.14" stroke-width="5"/><path d="M526 208L715 101" stroke="#000" stroke-opacity="0.17" stroke-width="2"/><path d="M338 201L581 81" stroke="#000" stroke-opacity="0.17" stroke-width="1.5"/><path d="M453 122L696 -22" stroke="#000" stroke-opacity="0.07" stroke-width="14"/><path d="M467 396L680 281" stroke="#000" stroke-opacity="0.12" stroke-width="5"/><path d="M490 447L740 327" stroke="#000" stroke-opacity="0.30" stroke-width="1.5"/><path d="M374 339L619 224" stroke="#fff" stroke-opacity="0.09" stroke-width="14"/><path d="M276 310L524 172" stroke="#000" stroke-opacity="0.18" stroke-width="3"/><path d="M292 417L444 338" stroke="#000" stroke-opacity="0.09" stroke-width="9"/><path d="M309 286L623 152" stroke="#fff" stroke-opacity="0.15" stroke-width="14"/><path d="M186 132L372 29" stroke="#000" stroke-opacity="0.14" stroke-width="5"/><path d="M244 120L508 -10" stroke="#000" stroke-opacity="0.34" stroke-width="3"/><path d="M347 313L633 144" stroke="#000" stroke-opacity="0.14" stroke-width="14"/><path d="M296 102L572 -61" stroke="#000" stroke-opacity="0.35" stroke-width="1.5"/><path d="M168 306L327 227" stroke="#000" stroke-opacity="0.07" stroke-width="9"/><path d="M131 418L405 261" stroke="#000" stroke-opacity="0.34" stroke-width="3"/><path d="M329 107L588 -4" stroke="#000" stroke-opacity="0.11" stroke-width="5"/><path d="M165 200L367 109" stroke="#000" stroke-opacity="0.25" stroke-width="2"/><path d="M539 208L847 73" stroke="#000" stroke-opacity="0.09" stroke-width="9"/><path d="M160 407L425 290" stroke="#000" stroke-opacity="0.30" stroke-width="3"/><path d="M463 195L654 108" stroke="#fff" stroke-opacity="0.31" stroke-width="2"/><circle cx="479" cy="115" r="4.6" fill="#000" fill-opacity="0.13"/><circle cx="360" cy="32" r="3.1" fill="#000" fill-opacity="0.13"/><circle cx="337" cy="129" r="5.1" fill="#000" fill-opacity="0.13"/><circle cx="547" cy="208" r="5.8" fill="#000" fill-opacity="0.13"/><circle cx="556" cy="421" r="4.1" fill="#000" fill-opacity="0.13"/><circle cx="318" cy="115" r="3.6" fill="#000" fill-opacity="0.13"/><circle cx="313" cy="282" r="5.7" fill="#000" fill-opacity="0.13"/><circle cx="511" cy="221" r="5.0" fill="#000" fill-opacity="0.13"/><circle cx="498" cy="56" r="5.0" fill="#000" fill-opacity="0.13"/><circle cx="532" cy="349" r="5.3" fill="#000" fill-opacity="0.13"/><circle cx="398" cy="95" r="5.4" fill="#000" fill-opacity="0.13"/><circle cx="353" cy="356" r="5.9" fill="#000" fill-opacity="0.13"/><circle cx="373" cy="189" r="5.8" fill="#000" fill-opacity="0.13"/><circle cx="475" cy="91" r="3.4" fill="#000" fill-opacity="0.13"/><circle cx="297" cy="400" r="5.4" fill="#000" fill-opacity="0.13"/><circle cx="295" cy="367" r="5.9" fill="#000" fill-opacity="0.13"/><circle cx="454" cy="167" r="4.6" fill="#000" fill-opacity="0.13"/><circle cx="291" cy="26" r="5.9" fill="#000" fill-opacity="0.13"/><circle cx="451" cy="241" r="5.8" fill="#000" fill-opacity="0.13"/><circle cx="384" cy="386" r="5.5" fill="#000" fill-opacity="0.13"/><circle cx="315" cy="126" r="3.9" fill="#000" fill-opacity="0.13"/><circle cx="325" cy="266" r="3.8" fill="#000" fill-opacity="0.13"/><rect x="127" y="213" width="37" height="9" rx="3" transform="rotate(60 127 213)" fill="#000" fill-opacity="0.14"/><rect x="265" y="367" width="36" height="7" rx="3" transform="rotate(-30 265 367)" fill="#000" fill-opacity="0.12"/><rect x="-13" y="336" width="14" height="6" rx="3" transform="rotate(-30 -13 336)" fill="#000" fill-opacity="0.08"/><rect x="146" y="451" width="26" height="9" rx="3" transform="rotate(0 146 451)" fill="#000" fill-opacity="0.12"/><rect x="149" y="471" width="36" height="6" rx="3" transform="rotate(-30 149 471)" fill="#000" fill-opacity="0.09"/><rect x="250" y="364" width="26" height="12" rx="3" transform="rotate(-35 250 364)" fill="#000" fill-opacity="0.11"/><rect x="194" y="363" width="24" height="12" rx="3" transform="rotate(60 194 363)" fill="#000" fill-opacity="0.12"/><rect x="163" y="511" width="38" height="13" rx="3" transform="rotate(-30 163 511)" fill="#000" fill-opacity="0.16"/><rect x="28" y="209" width="22" height="7" rx="3" transform="rotate(-30 28 209)" fill="#000" fill-opacity="0.11"/><rect x="54" y="281" width="12" height="12" rx="3" transform="rotate(-32 54 281)" fill="#000" fill-opacity="0.14"/><rect x="108" y="261" width="12" height="10" rx="3" transform="rotate(-32 108 261)" fill="#000" fill-opacity="0.17"/><rect x="119" y="355" width="40" height="13" rx="3" transform="rotate(-30 119 355)" fill="#000" fill-opacity="0.14"/><rect x="105" y="197" width="20" height="9" rx="3" transform="rotate(60 105 197)" fill="#000" fill-opacity="0.11"/><rect x="-14" y="293" width="28" height="10" rx="3" transform="rotate(-35 -14 293)" fill="#000" fill-opacity="0.07"/><rect x="301" y="252" width="11" height="8" rx="3" transform="rotate(-30 301 252)" fill="#000" fill-opacity="0.09"/><rect x="25" y="329" width="37" height="13" rx="3" transform="rotate(55 25 329)" fill="#000" fill-opacity="0.11"/><rect x="168" y="366" width="24" height="9" rx="3" transform="rotate(55 168 366)" fill="#000" fill-opacity="0.07"/><rect x="221" y="331" width="10" height="14" rx="3" transform="rotate(-32 221 331)" fill="#000" fill-opacity="0.07"/><rect x="71" y="404" width="15" height="8" rx="3" transform="rotate(-35 71 404)" fill="#000" fill-opacity="0.11"/><rect x="99" y="382" width="38" height="8" rx="3" transform="rotate(-30 99 382)" fill="#000" fill-opacity="0.07"/><rect x="228" y="536" width="39" height="8" rx="3" transform="rotate(-30 228 536)" fill="#000" fill-opacity="0.08"/><rect x="89" y="282" width="32" height="8" rx="3" transform="rotate(0 89 282)" fill="#000" fill-opacity="0.14"/><rect x="75" y="482" width="40" height="6" rx="3" transform="rotate(-35 75 482)" fill="#000" fill-opacity="0.15"/><rect x="173" y="236" width="23" height="13" rx="3" transform="rotate(-35 173 236)" fill="#000" fill-opacity="0.14"/><rect x="208" y="423" width="25" height="13" rx="3" transform="rotate(0 208 423)" fill="#000" fill-opacity="0.10"/><rect x="55" y="252" width="14" height="13" rx="3" transform="rotate(-32 55 252)" fill="#000" fill-opacity="0.14"/><rect x="122" y="299" width="10" height="7" rx="3" transform="rotate(-35 122 299)" fill="#000" fill-opacity="0.14"/><rect x="213" y="313" width="24" height="14" rx="3" transform="rotate(0 213 313)" fill="#000" fill-opacity="0.09"/><rect x="83" y="344" width="13" height="10" rx="3" transform="rotate(55 83 344)" fill="#000" fill-opacity="0.10"/><rect x="95" y="555" width="18" height="6" rx="3" transform="rotate(55 95 555)" fill="#000" fill-opacity="0.09"/><rect x="44" y="294" width="11" height="8" rx="3" transform="rotate(-32 44 294)" fill="#000" fill-opacity="0.08"/><rect x="157" y="162" width="16" height="7" rx="3" transform="rotate(60 157 162)" fill="#000" fill-opacity="0.13"/><rect x="118" y="280" width="28" height="7" rx="3" transform="rotate(0 118 280)" fill="#000" fill-opacity="0.16"/><rect x="34" y="518" width="33" height="11" rx="3" transform="rotate(55 34 518)" fill="#000" fill-opacity="0.15"/><rect x="153" y="274" width="28" height="7" rx="3" transform="rotate(-32 153 274)" fill="#000" fill-opacity="0.17"/><rect x="200" y="454" width="34" height="7" rx="3" transform="rotate(0 200 454)" fill="#000" fill-opacity="0.15"/><rect x="179" y="486" width="9" height="11" rx="3" transform="rotate(-32 179 486)" fill="#000" fill-opacity="0.14"/><rect x="223" y="252" width="9" height="7" rx="3" transform="rotate(55 223 252)" fill="#000" fill-opacity="0.18"/><rect x="112" y="341" width="10" height="6" rx="3" transform="rotate(0 112 341)" fill="#000" fill-opacity="0.14"/><rect x="151" y="161" width="34" height="12" rx="3" transform="rotate(0 151 161)" fill="#000" fill-opacity="0.17"/><rect x="12" y="371" width="32" height="10" rx="3" transform="rotate(-35 12 371)" fill="#000" fill-opacity="0.16"/><rect x="62" y="463" width="15" height="11" rx="3" transform="rotate(60 62 463)" fill="#000" fill-opacity="0.12"/><rect x="114" y="352" width="30" height="12" rx="3" transform="rotate(0 114 352)" fill="#000" fill-opacity="0.14"/><rect x="49" y="400" width="19" height="11" rx="3" transform="rotate(-32 49 400)" fill="#000" fill-opacity="0.10"/><rect x="179" y="165" width="10" height="8" rx="3" transform="rotate(-32 179 165)" fill="#000" fill-opacity="0.07"/><rect x="56" y="356" width="31" height="8" rx="3" transform="rotate(60 56 356)" fill="#000" fill-opacity="0.12"/><rect x="21" y="518" width="14" height="14" rx="3" transform="rotate(60 21 518)" fill="#000" fill-opacity="0.06"/><rect x="141" y="489" width="39" height="10" rx="3" transform="rotate(55 141 489)" fill="#000" fill-opacity="0.11"/><rect x="301" y="533" width="10" height="7" rx="3" transform="rotate(-32 301 533)" fill="#000" fill-opacity="0.12"/><rect x="313" y="213" width="24" height="13" rx="3" transform="rotate(-32 313 213)" fill="#000" fill-opacity="0.10"/><rect x="154" y="511" width="21" height="7" rx="3" transform="rotate(60 154 511)" fill="#000" fill-opacity="0.14"/><rect x="122" y="452" width="21" height="9" rx="3" transform="rotate(-35 122 452)" fill="#000" fill-opacity="0.16"/><rect x="-19" y="461" width="35" height="7" rx="3" transform="rotate(-30 -19 461)" fill="#000" fill-opacity="0.15"/><rect x="118" y="561" width="27" height="9" rx="3" transform="rotate(60 118 561)" fill="#000" fill-opacity="0.15"/><rect x="212" y="415" width="13" height="14" rx="3" transform="rotate(60 212 415)" fill="#000" fill-opacity="0.12"/><rect x="46" y="310" width="39" height="13" rx="3" transform="rotate(-32 46 310)" fill="#000" fill-opacity="0.11"/><rect x="8" y="534" width="21" height="11" rx="3" transform="rotate(-30 8 534)" fill="#000" fill-opacity="0.14"/><rect x="80" y="180" width="38" height="7" rx="3" transform="rotate(60 80 180)" fill="#000" fill-opacity="0.11"/><rect x="79" y="263" width="32" height="11" rx="3" transform="rotate(60 79 263)" fill="#000" fill-opacity="0.14"/><rect x="85" y="383" width="21" height="7" rx="3" transform="rotate(-30 85 383)" fill="#000" fill-opacity="0.07"/><rect x="155" y="486" width="26" height="10" rx="3" transform="rotate(55 155 486)" fill="#000" fill-opacity="0.18"/><rect x="137" y="216" width="14" height="7" rx="3" transform="rotate(55 137 216)" fill="#000" fill-opacity="0.13"/><rect x="92" y="308" width="34" height="8" rx="3" transform="rotate(-35 92 308)" fill="#000" fill-opacity="0.15"/><rect x="124" y="326" width="25" height="9" rx="3" transform="rotate(55 124 326)" fill="#000" fill-opacity="0.15"/><rect x="154" y="390" width="20" height="11" rx="3" transform="rotate(0 154 390)" fill="#000" fill-opacity="0.14"/><rect x="67" y="320" width="22" height="14" rx="3" transform="rotate(-35 67 320)" fill="#000" fill-opacity="0.08"/><rect x="129" y="466" width="34" height="14" rx="3" transform="rotate(60 129 466)" fill="#000" fill-opacity="0.06"/><rect x="117" y="532" width="34" height="13" rx="3" transform="rotate(60 117 532)" fill="#000" fill-opacity="0.09"/><rect x="18" y="222" width="25" height="11" rx="3" transform="rotate(-32 18 222)" fill="#000" fill-opacity="0.14"/><rect x="276" y="519" width="11" height="12" rx="3" transform="rotate(-35 276 519)" fill="#000" fill-opacity="0.15"/><rect x="61" y="529" width="29" height="8" rx="3" transform="rotate(-30 61 529)" fill="#000" fill-opacity="0.14"/><rect x="165" y="335" width="32" height="7" rx="3" transform="rotate(55 165 335)" fill="#000" fill-opacity="0.12"/><rect x="184" y="316" width="15" height="11" rx="3" transform="rotate(-35 184 316)" fill="#000" fill-opacity="0.12"/><rect x="171" y="172" width="21" height="11" rx="3" transform="rotate(-35 171 172)" fill="#000" fill-opacity="0.06"/><rect x="154" y="430" width="21" height="8" rx="3" transform="rotate(-32 154 430)" fill="#000" fill-opacity="0.11"/><rect x="110" y="358" width="30" height="12" rx="3" transform="rotate(55 110 358)" fill="#000" fill-opacity="0.14"/><rect x="49" y="480" width="32" height="10" rx="3" transform="rotate(-30 49 480)" fill="#000" fill-opacity="0.12"/><rect x="50" y="467" width="14" height="10" rx="3" transform="rotate(55 50 467)" fill="#000" fill-opacity="0.15"/><rect x="83" y="542" width="24" height="7" rx="3" transform="rotate(-30 83 542)" fill="#000" fill-opacity="0.12"/><rect x="189" y="327" width="31" height="7" rx="3" transform="rotate(60 189 327)" fill="#000" fill-opacity="0.17"/><rect x="289" y="454" width="40" height="13" rx="3" transform="rotate(55 289 454)" fill="#000" fill-opacity="0.08"/><rect x="208" y="370" width="23" height="8" rx="3" transform="rotate(-32 208 370)" fill="#000" fill-opacity="0.11"/><rect x="111" y="293" width="13" height="6" rx="3" transform="rotate(55 111 293)" fill="#000" fill-opacity="0.07"/><rect x="127" y="515" width="26" height="12" rx="3" transform="rotate(60 127 515)" fill="#000" fill-opacity="0.10"/><rect x="268" y="490" width="22" height="6" rx="3" transform="rotate(60 268 490)" fill="#000" fill-opacity="0.08"/><rect x="170" y="339" width="18" height="12" rx="3" transform="rotate(60 170 339)" fill="#000" fill-opacity="0.06"/><rect x="124" y="486" width="33" height="6" rx="3" transform="rotate(-35 124 486)" fill="#000" fill-opacity="0.12"/><rect x="2" y="403" width="20" height="9" rx="3" transform="rotate(0 2 403)" fill="#000" fill-opacity="0.07"/><rect x="241" y="437" width="38" height="8" rx="3" transform="rotate(-32 241 437)" fill="#000" fill-opacity="0.15"/><rect x="301" y="414" width="9" height="8" rx="3" transform="rotate(60 301 414)" fill="#000" fill-opacity="0.15"/><rect x="143" y="471" width="33" height="13" rx="3" transform="rotate(60 143 471)" fill="#000" fill-opacity="0.08"/><rect x="154" y="163" width="38" height="8" rx="3" transform="rotate(-32 154 163)" fill="#000" fill-opacity="0.15"/><rect x="193" y="291" width="18" height="9" rx="3" transform="rotate(0 193 291)" fill="#000" fill-opacity="0.07"/><rect x="49" y="462" width="16" height="7" rx="3" transform="rotate(-35 49 462)" fill="#000" fill-opacity="0.12"/><rect x="171" y="224" width="22" height="7" rx="3" transform="rotate(-35 171 224)" fill="#000" fill-opacity="0.09"/><rect x="9" y="199" width="24" height="12" rx="3" transform="rotate(60 9 199)" fill="#000" fill-opacity="0.08"/><rect x="27" y="345" width="37" height="8" rx="3" transform="rotate(0 27 345)" fill="#000" fill-opacity="0.16"/><rect x="213" y="209" width="35" height="8" rx="3" transform="rotate(0 213 209)" fill="#000" fill-opacity="0.09"/><rect x="69" y="264" width="22" height="7" rx="3" transform="rotate(-30 69 264)" fill="#000" fill-opacity="0.08"/><rect x="119" y="558" width="24" height="8" rx="3" transform="rotate(-35 119 558)" fill="#000" fill-opacity="0.14"/><rect x="267" y="497" width="37" height="6" rx="3" transform="rotate(55 267 497)" fill="#000" fill-opacity="0.09"/><rect x="-2" y="401" width="34" height="8" rx="3" transform="rotate(-35 -2 401)" fill="#000" fill-opacity="0.10"/><rect x="252" y="539" width="11" height="11" rx="3" transform="rotate(0 252 539)" fill="#000" fill-opacity="0.10"/><rect x="-7" y="296" width="9" height="14" rx="3" transform="rotate(-35 -7 296)" fill="#000" fill-opacity="0.13"/><rect x="208" y="242" width="8" height="9" rx="3" transform="rotate(-32 208 242)" fill="#000" fill-opacity="0.10"/><rect x="197" y="191" width="9" height="10" rx="3" transform="rotate(60 197 191)" fill="#000" fill-opacity="0.07"/><rect x="15" y="319" width="26" height="11" rx="3" transform="rotate(-35 15 319)" fill="#000" fill-opacity="0.14"/><rect x="119" y="269" width="40" height="11" rx="3" transform="rotate(60 119 269)" fill="#000" fill-opacity="0.17"/><rect x="89" y="387" width="19" height="9" rx="3" transform="rotate(55 89 387)" fill="#000" fill-opacity="0.14"/><rect x="117" y="322" width="38" height="9" rx="3" transform="rotate(-30 117 322)" fill="#000" fill-opacity="0.11"/><rect x="267" y="323" width="23" height="7" rx="3" transform="rotate(-35 267 323)" fill="#000" fill-opacity="0.07"/><rect x="30" y="483" width="21" height="11" rx="3" transform="rotate(55 30 483)" fill="#000" fill-opacity="0.15"/><rect x="40" y="300" width="13" height="7" rx="3" transform="rotate(-35 40 300)" fill="#000" fill-opacity="0.07"/><rect x="152" y="483" width="39" height="8" rx="3" transform="rotate(-30 152 483)" fill="#000" fill-opacity="0.16"/><rect x="-5" y="526" width="18" height="11" rx="3" transform="rotate(-32 -5 526)" fill="#000" fill-opacity="0.11"/><rect x="296" y="409" width="13" height="12" rx="3" transform="rotate(-30 296 409)" fill="#000" fill-opacity="0.13"/><rect x="195" y="239" width="23" height="11" rx="3" transform="rotate(-35 195 239)" fill="#000" fill-opacity="0.11"/><rect x="161" y="314" width="12" height="8" rx="3" transform="rotate(-32 161 314)" fill="#000" fill-opacity="0.16"/><rect x="47" y="514" width="35" height="11" rx="3" transform="rotate(-32 47 514)" fill="#000" fill-opacity="0.16"/><rect x="21" y="400" width="26" height="11" rx="3" transform="rotate(55 21 400)" fill="#000" fill-opacity="0.14"/><rect x="88" y="260" width="20" height="9" rx="3" transform="rotate(0 88 260)" fill="#000" fill-opacity="0.11"/><rect x="-12" y="408" width="24" height="8" rx="3" transform="rotate(0 -12 408)" fill="#000" fill-opacity="0.15"/><rect x="140" y="232" width="23" height="7" rx="3" transform="rotate(-30 140 232)" fill="#000" fill-opacity="0.10"/><rect x="108" y="482" width="24" height="11" rx="3" transform="rotate(-35 108 482)" fill="#000" fill-opacity="0.14"/><rect x="9" y="454" width="33" height="10" rx="3" transform="rotate(-35 9 454)" fill="#000" fill-opacity="0.15"/><rect x="293" y="422" width="33" height="6" rx="3" transform="rotate(-35 293 422)" fill="#000" fill-opacity="0.18"/><rect x="236" y="487" width="14" height="14" rx="3" transform="rotate(60 236 487)" fill="#000" fill-opacity="0.09"/><rect x="264" y="479" width="30" height="12" rx="3" transform="rotate(-30 264 479)" fill="#000" fill-opacity="0.07"/><rect x="103" y="463" width="13" height="13" rx="3" transform="rotate(55 103 463)" fill="#000" fill-opacity="0.17"/><rect x="140" y="262" width="39" height="10" rx="3" transform="rotate(0 140 262)" fill="#000" fill-opacity="0.09"/><rect x="157" y="288" width="9" height="7" rx="3" transform="rotate(-30 157 288)" fill="#000" fill-opacity="0.14"/><rect x="77" y="291" width="20" height="12" rx="3" transform="rotate(55 77 291)" fill="#000" fill-opacity="0.07"/><rect x="166" y="415" width="20" height="13" rx="3" transform="rotate(0 166 415)" fill="#000" fill-opacity="0.12"/><rect x="221" y="519" width="16" height="10" rx="3" transform="rotate(60 221 519)" fill="#000" fill-opacity="0.15"/><rect x="110" y="311" width="20" height="7" rx="3" transform="rotate(55 110 311)" fill="#000" fill-opacity="0.15"/><rect x="135" y="231" width="32" height="6" rx="3" transform="rotate(0 135 231)" fill="#000" fill-opacity="0.09"/><rect x="204" y="555" width="27" height="11" rx="3" transform="rotate(55 204 555)" fill="#000" fill-opacity="0.15"/><rect x="199" y="327" width="20" height="6" rx="3" transform="rotate(60 199 327)" fill="#000" fill-opacity="0.09"/><rect x="104" y="203" width="19" height="8" rx="3" transform="rotate(0 104 203)" fill="#000" fill-opacity="0.10"/><rect x="27" y="307" width="35" height="7" rx="3" transform="rotate(-35 27 307)" fill="#000" fill-opacity="0.17"/><rect x="65" y="220" width="11" height="11" rx="3" transform="rotate(-32 65 220)" fill="#000" fill-opacity="0.15"/><rect x="121" y="266" width="8" height="11" rx="3" transform="rotate(0 121 266)" fill="#000" fill-opacity="0.17"/><rect x="188" y="392" width="27" height="10" rx="3" transform="rotate(60 188 392)" fill="#000" fill-opacity="0.09"/><rect x="122" y="255" width="10" height="12" rx="3" transform="rotate(-35 122 255)" fill="#000" fill-opacity="0.13"/><rect x="210" y="239" width="21" height="10" rx="3" transform="rotate(-32 210 239)" fill="#000" fill-opacity="0.12"/><rect x="205" y="486" width="14" height="8" rx="3" transform="rotate(55 205 486)" fill="#000" fill-opacity="0.14"/><rect x="328" y="450" width="23" height="10" rx="3" transform="rotate(60 328 450)" fill="#000" fill-opacity="0.16"/><rect x="241" y="347" width="32" height="10" rx="3" transform="rotate(-30 241 347)" fill="#000" fill-opacity="0.18"/><rect x="71" y="418" width="12" height="13" rx="3" transform="rotate(-32 71 418)" fill="#000" fill-opacity="0.17"/><rect x="72" y="181" width="28" height="11" rx="3" transform="rotate(-32 72 181)" fill="#000" fill-opacity="0.15"/><rect x="163" y="266" width="29" height="14" rx="3" transform="rotate(-30 163 266)" fill="#000" fill-opacity="0.07"/><rect x="158" y="228" width="37" height="13" rx="3" transform="rotate(-30 158 228)" fill="#000" fill-opacity="0.17"/><rect x="299" y="269" width="27" height="7" transform="rotate(-30 299 269)" fill="#000" fill-opacity="0.11"/><rect x="359" y="317" width="30" height="11" transform="rotate(35 359 317)" fill="#000" fill-opacity="0.12"/><rect x="338" y="302" width="27" height="7" transform="rotate(35 338 302)" fill="#000" fill-opacity="0.09"/><rect x="348" y="329" width="17" height="9" transform="rotate(35 348 329)" fill="#000" fill-opacity="0.17"/><rect x="280" y="284" width="10" height="11" transform="rotate(60 280 284)" fill="#000" fill-opacity="0.18"/><rect x="281" y="279" width="11" height="9" transform="rotate(-30 281 279)" fill="#000" fill-opacity="0.14"/><rect x="284" y="278" width="21" height="7" transform="rotate(35 284 278)" fill="#000" fill-opacity="0.17"/><rect x="310" y="381" width="28" height="12" transform="rotate(-30 310 381)" fill="#000" fill-opacity="0.09"/><rect x="279" y="283" width="29" height="11" transform="rotate(35 279 283)" fill="#000" fill-opacity="0.07"/><rect x="318" y="260" width="18" height="5" transform="rotate(35 318 260)" fill="#000" fill-opacity="0.08"/><rect x="246" y="274" width="8" height="6" transform="rotate(60 246 274)" fill="#000" fill-opacity="0.07"/><rect x="337" y="256" width="25" height="9" transform="rotate(60 337 256)" fill="#000" fill-opacity="0.16"/><rect x="280" y="278" width="17" height="7" transform="rotate(-30 280 278)" fill="#000" fill-opacity="0.10"/><rect x="301" y="247" width="13" height="11" transform="rotate(-30 301 247)" fill="#000" fill-opacity="0.13"/><rect x="249" y="284" width="20" height="6" transform="rotate(-30 249 284)" fill="#000" fill-opacity="0.06"/><rect x="247" y="228" width="26" height="5" transform="rotate(60 247 228)" fill="#000" fill-opacity="0.13"/><rect x="320" y="331" width="21" height="5" transform="rotate(-30 320 331)" fill="#000" fill-opacity="0.17"/><rect x="272" y="289" width="29" height="10" transform="rotate(60 272 289)" fill="#000" fill-opacity="0.15"/><rect x="307" y="227" width="22" height="7" transform="rotate(60 307 227)" fill="#000" fill-opacity="0.17"/><rect x="345" y="329" width="17" height="9" transform="rotate(60 345 329)" fill="#000" fill-opacity="0.08"/><rect x="222" y="303" width="19" height="7" transform="rotate(35 222 303)" fill="#000" fill-opacity="0.09"/><rect x="240" y="228" width="25" height="10" transform="rotate(35 240 228)" fill="#000" fill-opacity="0.06"/><rect x="266" y="222" width="27" height="8" transform="rotate(35 266 222)" fill="#000" fill-opacity="0.15"/><rect x="271" y="318" width="25" height="9" transform="rotate(-30 271 318)" fill="#000" fill-opacity="0.10"/><rect x="284" y="214" width="19" height="6" transform="rotate(35 284 214)" fill="#000" fill-opacity="0.16"/><rect x="274" y="205" width="29" height="10" transform="rotate(35 274 205)" fill="#000" fill-opacity="0.12"/><rect x="275" y="310" width="12" height="12" transform="rotate(35 275 310)" fill="#000" fill-opacity="0.18"/><rect x="268" y="337" width="12" height="5" transform="rotate(-30 268 337)" fill="#000" fill-opacity="0.16"/><rect x="303" y="261" width="12" height="9" transform="rotate(-30 303 261)" fill="#000" fill-opacity="0.09"/><rect x="320" y="309" width="8" height="11" transform="rotate(60 320 309)" fill="#000" fill-opacity="0.14"/><rect x="240" y="211" width="18" height="5" transform="rotate(35 240 211)" fill="#000" fill-opacity="0.15"/><rect x="295" y="308" width="27" height="10" transform="rotate(35 295 308)" fill="#000" fill-opacity="0.15"/><rect x="261" y="262" width="24" height="11" transform="rotate(35 261 262)" fill="#000" fill-opacity="0.14"/><rect x="338" y="308" width="22" height="8" transform="rotate(60 338 308)" fill="#000" fill-opacity="0.09"/><rect x="313" y="222" width="13" height="7" transform="rotate(35 313 222)" fill="#000" fill-opacity="0.14"/><rect x="255" y="295" width="18" height="9" transform="rotate(60 255 295)" fill="#000" fill-opacity="0.12"/><rect x="294" y="205" width="28" height="7" transform="rotate(-30 294 205)" fill="#000" fill-opacity="0.11"/><rect x="214" y="176" width="9" height="8" transform="rotate(-30 214 176)" fill="#000" fill-opacity="0.15"/><rect x="296" y="300" width="16" height="11" transform="rotate(60 296 300)" fill="#000" fill-opacity="0.12"/><rect x="303" y="252" width="22" height="11" transform="rotate(35 303 252)" fill="#000" fill-opacity="0.10"/><rect x="305" y="263" width="30" height="5" transform="rotate(35 305 263)" fill="#000" fill-opacity="0.15"/><rect x="285" y="382" width="16" height="4" transform="rotate(60 285 382)" fill="#000" fill-opacity="0.11"/><rect x="283" y="290" width="28" height="9" transform="rotate(35 283 290)" fill="#000" fill-opacity="0.10"/><rect x="265" y="286" width="24" height="12" transform="rotate(35 265 286)" fill="#000" fill-opacity="0.18"/><rect x="343" y="386" width="18" height="5" transform="rotate(-30 343 386)" fill="#000" fill-opacity="0.16"/><rect x="281" y="235" width="20" height="6" transform="rotate(-30 281 235)" fill="#000" fill-opacity="0.10"/><rect x="283" y="202" width="26" height="8" transform="rotate(60 283 202)" fill="#000" fill-opacity="0.15"/><rect x="288" y="209" width="18" height="10" transform="rotate(-30 288 209)" fill="#000" fill-opacity="0.09"/><rect x="258" y="267" width="17" height="5" transform="rotate(-30 258 267)" fill="#000" fill-opacity="0.16"/><rect x="307" y="281" width="22" height="7" transform="rotate(60 307 281)" fill="#000" fill-opacity="0.11"/><rect x="282" y="217" width="16" height="11" transform="rotate(60 282 217)" fill="#000" fill-opacity="0.07"/><rect x="354" y="301" width="25" height="5" transform="rotate(60 354 301)" fill="#000" fill-opacity="0.14"/><rect x="281" y="282" width="29" height="9" transform="rotate(60 281 282)" fill="#000" fill-opacity="0.13"/><rect x="256" y="184" width="12" height="8" transform="rotate(-30 256 184)" fill="#000" fill-opacity="0.09"/><rect x="234" y="243" width="21" height="10" transform="rotate(-30 234 243)" fill="#000" fill-opacity="0.14"/><rect x="348" y="333" width="26" height="6" transform="rotate(35 348 333)" fill="#000" fill-opacity="0.09"/><rect x="304" y="376" width="23" height="5" transform="rotate(-30 304 376)" fill="#000" fill-opacity="0.09"/><rect x="273" y="287" width="19" height="4" transform="rotate(60 273 287)" fill="#000" fill-opacity="0.17"/><rect x="289" y="265" width="12" height="9" transform="rotate(35 289 265)" fill="#000" fill-opacity="0.06"/><rect x="319" y="296" width="20" height="9" transform="rotate(60 319 296)" fill="#000" fill-opacity="0.10"/><circle cx="110" cy="400" r="85" fill="none" stroke="#000" stroke-opacity="0.12" stroke-width="6"/><ellipse cx="250" cy="320" rx="120" ry="150" transform="rotate(-30 250 320)" fill="none" stroke="#000" stroke-opacity="0.1" stroke-width="3"/><rect x="142" y="79" width="13" height="12" rx="4" fill="none" stroke="#000" stroke-opacity="0.3" stroke-width="3"/><rect x="154" y="56" width="13" height="12" rx="4" fill="none" stroke="#000" stroke-opacity="0.3" stroke-width="3"/><rect x="176" y="36" width="13" height="12" rx="4" fill="none" stroke="#000" stroke-opacity="0.3" stroke-width="3"/><rect x="195" y="21" width="13" height="12" rx="4" fill="none" stroke="#000" stroke-opacity="0.3" stroke-width="3"/><rect x="217" y="11" width="13" height="12" rx="4" fill="none" stroke="#000" stroke-opacity="0.3" stroke-width="3"/><rect x="243" y="7" width="13" height="12" rx="4" fill="none" stroke="#000" stroke-opacity="0.3" stroke-width="3"/><rect x="270" y="5" width="13" height="12" rx="4" fill="none" stroke="#000" stroke-opacity="0.3" stroke-width="3"/><rect x="294" y="0" width="13" height="12" rx="4" fill="none" stroke="#000" stroke-opacity="0.3" stroke-width="3"/><rect x="324" y="-4" width="13" height="12" rx="4" fill="none" stroke="#000" stroke-opacity="0.3" stroke-width="3"/><rect x="324" y="491" width="13" height="12" rx="4" fill="none" stroke="#000" stroke-opacity="0.3" stroke-width="3"/><rect x="351" y="483" width="13" height="12" rx="4" fill="none" stroke="#000" stroke-opacity="0.3" stroke-width="3"/><rect x="378" y="475" width="13" height="12" rx="4" fill="none" stroke="#000" stroke-opacity="0.3" stroke-width="3"/><rect x="405" y="467" width="13" height="12" rx="4" fill="none" stroke="#000" stroke-opacity="0.3" stroke-width="3"/><rect x="433" y="460" width="13" height="12" rx="4" fill="none" stroke="#000" stroke-opacity="0.3" stroke-width="3"/><rect x="460" y="452" width="13" height="12" rx="4" fill="none" stroke="#000" stroke-opacity="0.3" stroke-width="3"/><rect x="487" y="444" width="13" height="12" rx="4" fill="none" stroke="#000" stroke-opacity="0.3" stroke-width="3"/><rect x="514" y="436" width="13" height="12" rx="4" fill="none" stroke="#000" stroke-opacity="0.3" stroke-width="3"/></g><ellipse cx="280" cy="279" rx="180.5" ry="104" transform="rotate(60 280 279)" fill="none" stroke="#d3672b" stroke-width="44"/><ellipse cx="283" cy="276" rx="200" ry="123" transform="rotate(60 283 276)" fill="none" stroke="#ee9560" stroke-width="5" stroke-dasharray="0 300 450 700"/><path d="M160 160C120 240 170 390 300 460" fill="none" stroke="#3a1a08" stroke-width="40" stroke-opacity="0.38" filter="url(#b3)"/><path d="M370 425L382 443L360 441Z" fill="#000" fill-opacity="0.035"/><path d="M344 433L356 451L334 449Z" fill="#000" fill-opacity="0.035"/><path d="M313 430L325 448L303 446Z" fill="#000" fill-opacity="0.035"/><path d="M280 416L292 434L270 432Z" fill="#000" fill-opacity="0.035"/><path d="M247 392L259 410L237 408Z" fill="#000" fill-opacity="0.035"/><path d="M216 360L228 378L206 376Z" fill="#000" fill-opacity="0.035"/><path d="M190 321L202 339L180 337Z" fill="#000" fill-opacity="0.035"/><path d="M170 279L182 297L160 295Z" fill="#000" fill-opacity="0.035"/><path d="M157 236L169 254L147 252Z" fill="#000" fill-opacity="0.035"/><path d="M153 196L165 214L143 212Z" fill="#000" fill-opacity="0.035"/><path d="M157 160L169 178L147 176Z" fill="#000" fill-opacity="0.035"/><path d="M170 132L182 150L160 148Z" fill="#000" fill-opacity="0.035"/><path d="M190 113L202 131L180 129Z" fill="#000" fill-opacity="0.035"/><path d="M216 105L228 123L206 121Z" fill="#000" fill-opacity="0.035"/><path d="M247 108L259 126L237 124Z" fill="#000" fill-opacity="0.035"/><path d="M280 122L292 140L270 138Z" fill="#000" fill-opacity="0.035"/><path d="M313 146L325 164L303 162Z" fill="#000" fill-opacity="0.035"/><path d="M344 178L356 196L334 194Z" fill="#000" fill-opacity="0.035"/><path d="M370 217L382 235L360 233Z" fill="#000" fill-opacity="0.035"/><path d="M390 259L402 277L380 275Z" fill="#000" fill-opacity="0.035"/><path d="M403 302L415 320L393 318Z" fill="#000" fill-opacity="0.035"/><path d="M407 342L419 360L397 358Z" fill="#000" fill-opacity="0.035"/><path d="M403 378L415 396L393 394Z" fill="#000" fill-opacity="0.035"/><path d="M390 406L402 424L380 422Z" fill="#000" fill-opacity="0.035"/><circle cx="280" cy="288" r="4" fill="#1c8a2c"/></svg></div>
<div class="a" style="left:56px;top:1988px;width:3568px;height:56px;background:#ededed"></div>
<svg class="a" style="left:0;top:1988px" width="400" height="56"><path d="M56 0H229L173.5 56H56Z" fill="#d6d6d6"/><path d="M229 0H237L181.5 56H173.5Z" fill="#fff"/></svg>
<div class="a" style="left:89px;top:2002px;font-size:26px;line-height:26px;white-space:pre;transform:scaleX(0.93);transform-origin:0 0">001190</div>
<div class="a" style="left:241px;top:2002px;font-size:26px;line-height:26px;white-space:pre;transform:scaleX(0.93);transform-origin:0 0">001153</div>
<div class="a" style="left:3628px;top:1988px;width:75px;height:56px;border:2px solid #7a7a7a;border-radius:5px;background:#fff"></div>
<div class="a" style="left:3708px;top:1988px;width:75px;height:56px;border:2px solid #7a7a7a;border-radius:5px;background:#fff"></div>
<svg class="a" style="left:3600px;top:1988px" width="200" height="56" fill="none" stroke="#000" stroke-width="2"><path d="M53 14H78M65.5 22V42M56 31L65.5 21.5L75 31M146 14V34M136.5 24.5L146 34L155.5 24.5M133 41H158"/></svg>
<div class="a" style="left:56px;top:2048px;width:3727px;height:56px;background:#ededed"></div>
<div class="a" style="left:496px;top:2061.7px;font-size:27px;line-height:27px;white-space:pre">86 total</div>
<div class="a" style="left:1404px;top:2061.7px;font-size:27px;line-height:27px;white-space:pre;letter-spacing:-0.6px">81 unique</div>
<div class="a" style="left:3242px;top:2061.7px;font-size:27px;line-height:27px;white-space:pre;letter-spacing:-0.9px">1 selected</div>
<div class="a" style="left:2848px;top:2096px;width:3752px;height:4px;background:#6aaed6;width:904px"></div>
</body></html>
